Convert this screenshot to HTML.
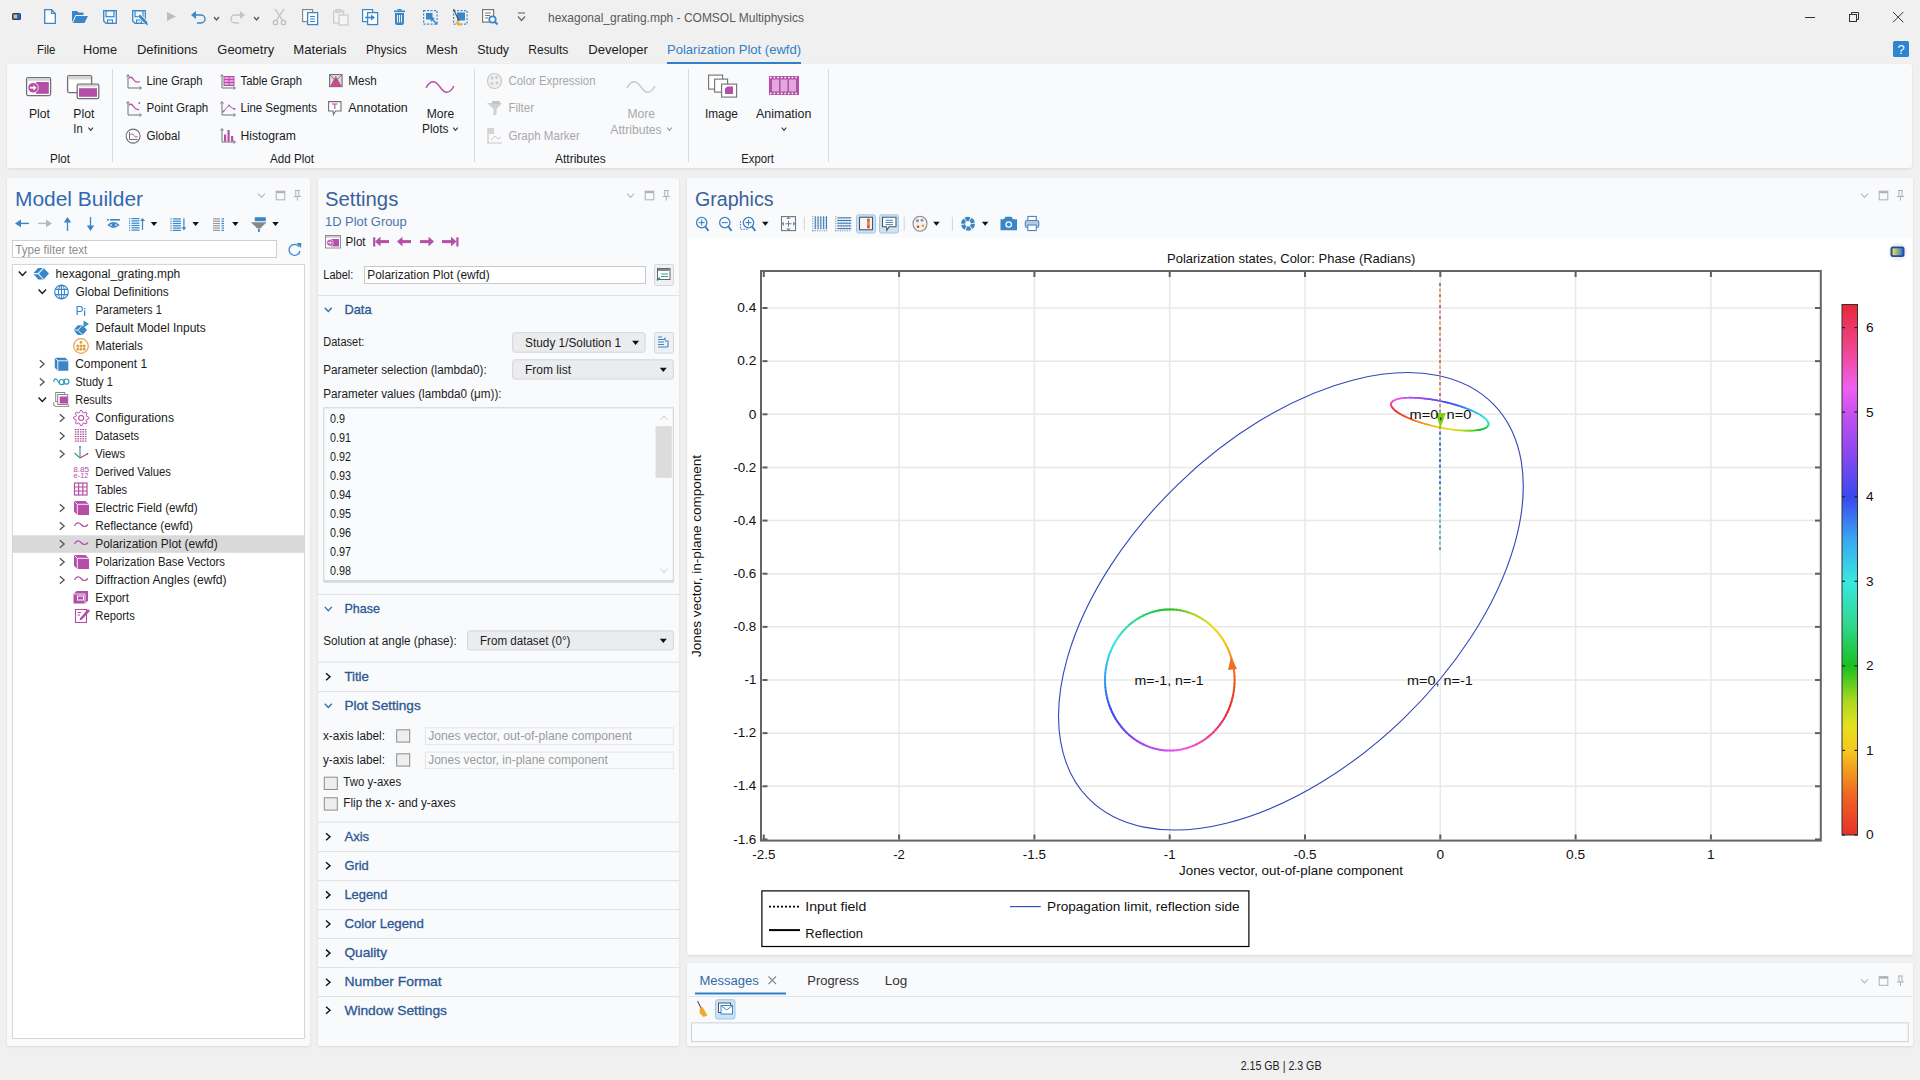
<!DOCTYPE html>
<html><head><meta charset="utf-8"><title>COMSOL</title>
<style>html,body{margin:0;padding:0;background:#f0f0f0;width:1920px;height:1080px;overflow:hidden}
svg{position:absolute;left:0;top:0;font-family:"Liberation Sans",sans-serif}</style></head>
<body><svg width="1920" height="1080" viewBox="0 0 1920 1080">
<defs><filter id="sh" x="-5%" y="-5%" width="110%" height="110%"><feDropShadow dx="0" dy="1" stdDeviation="0.8" flood-color="#000" flood-opacity="0.10"/></filter></defs>
<rect x="7" y="64" width="1905" height="104" fill="#f9fafc" rx="3" filter="url(#sh)"/>
<rect x="7" y="178" width="303" height="868" fill="#f9fafc" rx="3" filter="url(#sh)"/>
<rect x="318" y="178" width="361" height="868" fill="#f9fafc" rx="3" filter="url(#sh)"/>
<rect x="687" y="178" width="1226" height="777" fill="#f9fafc" rx="3" filter="url(#sh)"/>
<rect x="687" y="963" width="1226" height="83" fill="#f9fafc" rx="3" filter="url(#sh)"/>
<rect x="688" y="238" width="1224" height="716" fill="#ffffff"/>
<rect x="12.5" y="264.5" width="292" height="774" fill="#ffffff" stroke="#d6d6d6" stroke-width="1"/>
<rect x="12.5" y="240.5" width="264" height="17" fill="#ffffff" stroke="#cfcfcf" stroke-width="1"/>
<rect x="13" y="535.3" width="291.5" height="17.5" fill="#d9d9d9"/>
<rect x="667" y="62" width="134" height="2" fill="#2f80c8"/>
<line x1="112.5" y1="69" x2="112.5" y2="162" stroke="#dadada" stroke-width="1" />
<line x1="474.5" y1="69" x2="474.5" y2="162" stroke="#dadada" stroke-width="1" />
<line x1="688.5" y1="69" x2="688.5" y2="162" stroke="#dadada" stroke-width="1" />
<line x1="828.5" y1="69" x2="828.5" y2="162" stroke="#dadada" stroke-width="1" />
<line x1="318" y1="295.6" x2="679" y2="295.6" stroke="#dedfe2" stroke-width="1" />
<line x1="318" y1="594.4" x2="679" y2="594.4" stroke="#dedfe2" stroke-width="1" />
<line x1="318" y1="662.2" x2="679" y2="662.2" stroke="#dedfe2" stroke-width="1" />
<line x1="318" y1="691.6" x2="679" y2="691.6" stroke="#dedfe2" stroke-width="1" />
<line x1="318" y1="822.2" x2="679" y2="822.2" stroke="#dedfe2" stroke-width="1" />
<line x1="318" y1="851.6" x2="679" y2="851.6" stroke="#dedfe2" stroke-width="1" />
<line x1="318" y1="880.7" x2="679" y2="880.7" stroke="#dedfe2" stroke-width="1" />
<line x1="318" y1="909.6" x2="679" y2="909.6" stroke="#dedfe2" stroke-width="1" />
<line x1="318" y1="938.5" x2="679" y2="938.5" stroke="#dedfe2" stroke-width="1" />
<line x1="318" y1="967.6" x2="679" y2="967.6" stroke="#dedfe2" stroke-width="1" />
<line x1="318" y1="996.6" x2="679" y2="996.6" stroke="#dedfe2" stroke-width="1" />
<rect x="364.5" y="266.5" width="281" height="17" fill="#fff" stroke="#c9c9c9" stroke-width="1"/>
<rect x="654.5" y="264.5" width="19" height="21" fill="#eef0f3" stroke="#d4d6da" stroke-width="1" rx="2"/>
<g transform="translate(657,268)"><rect x="0.5" y="0.5" width="12.5" height="11" fill="#fff" stroke="#666" stroke-width="1"/><rect x="1" y="1" width="11.5" height="2" fill="#888"/><path d="M4,6 H11 M4,8.5 H11" stroke="#2aa0a0" stroke-width="1"/><path d="M0,12.5 L3,9.5" stroke="#2a9050" stroke-width="1.3"/></g>
<rect x="512.7" y="332.7" width="132.39999999999998" height="19.5" fill="#ebecee" stroke="#d3d5d8" stroke-width="1" rx="2"/>
<path d="M632.1,340.84999999999997 L639.1,340.84999999999997 L635.6,345.05 Z" fill="#111"/>
<rect x="512.7" y="359.8" width="160.5999999999999" height="19.30000000000001" fill="#ebecee" stroke="#d3d5d8" stroke-width="1" rx="2"/>
<path d="M659.8,367.85 L666.8,367.85 L663.3,372.05000000000007 Z" fill="#111"/>
<rect x="467.6" y="630.9" width="205.69999999999993" height="19.0" fill="#ebecee" stroke="#d3d5d8" stroke-width="1" rx="2"/>
<path d="M659.8,638.8 L666.8,638.8 L663.3,643.0 Z" fill="#111"/>
<rect x="654.5" y="332.5" width="19" height="20.5" fill="#eef0f3" stroke="#d4d6da" stroke-width="1" rx="2"/>
<g transform="translate(658,336)"><path d="M0,1 H4 M0,3.5 H6 M0,6 H6 M0,8.5 H6 M0,11 H10" stroke="#3a86c8" stroke-width="1"/><path d="M7,5 H10 V11" stroke="#3a86c8" stroke-width="1.1" fill="none"/><path d="M5.5,3 L7.5,1 L7.5,5 Z" fill="#3a86c8"/></g>
<rect x="323.8" y="407.8" width="349.5" height="174" fill="#fafbfd" stroke="#cfd1d4" stroke-width="1"/>
<rect x="324" y="580" width="349.5" height="2.6" fill="#d8d8d8"/>
<rect x="655.6" y="426.2" width="16.2" height="51.6" fill="#dcdcdc"/>
<path d="M660.5,568.75 L664,572.25 L667.5,568.75" fill="none" stroke="#c8c8c8" stroke-width="1"/>
<path d="M660.5,419.5 L664,416 L667.5,419.5" fill="none" stroke="#c8c8c8" stroke-width="1"/>
<rect x="396.7" y="729.8" width="13" height="12.3" fill="#eeeeee" stroke="#8c8c8c" stroke-width="1"/>
<rect x="396.7" y="753.8" width="13" height="12.3" fill="#eeeeee" stroke="#8c8c8c" stroke-width="1"/>
<rect x="324.3" y="777.2" width="13" height="12.3" fill="#eeeeee" stroke="#8c8c8c" stroke-width="1"/>
<rect x="324.3" y="797.8" width="13" height="12.3" fill="#eeeeee" stroke="#8c8c8c" stroke-width="1"/>
<rect x="425.4" y="727.8" width="248" height="16.6" fill="#f9fafc" stroke="#e3e4e7" stroke-width="1"/>
<rect x="425.4" y="752.1" width="248" height="16.3" fill="#f9fafc" stroke="#e3e4e7" stroke-width="1"/>
<path d="M324.8,307.70000000000005 L328.3,311.5 L331.8,307.70000000000005" fill="none" stroke="#3a6aa8" stroke-width="1.3"/>
<path d="M324.8,606.9 L328.3,610.6999999999999 L331.8,606.9" fill="none" stroke="#3a6aa8" stroke-width="1.3"/>
<path d="M324.8,703.7 L328.3,707.5 L331.8,703.7" fill="none" stroke="#3a6aa8" stroke-width="1.3"/>
<path d="M326.0,673.2 L330.0,676.7 L326.0,680.2" fill="none" stroke="#111" stroke-width="1.4"/>
<path d="M326.0,833.2 L330.0,836.7 L326.0,840.2" fill="none" stroke="#111" stroke-width="1.4"/>
<path d="M326.0,862.3 L330.0,865.8 L326.0,869.3" fill="none" stroke="#111" stroke-width="1.4"/>
<path d="M326.0,891.4 L330.0,894.9 L326.0,898.4" fill="none" stroke="#111" stroke-width="1.4"/>
<path d="M326.0,920.5 L330.0,924 L326.0,927.5" fill="none" stroke="#111" stroke-width="1.4"/>
<path d="M326.0,949.6 L330.0,953.1 L326.0,956.6" fill="none" stroke="#111" stroke-width="1.4"/>
<path d="M326.0,978.7 L330.0,982.2 L326.0,985.7" fill="none" stroke="#111" stroke-width="1.4"/>
<path d="M326.0,1006.8 L330.0,1010.3 L326.0,1013.8" fill="none" stroke="#111" stroke-width="1.4"/>
<rect x="695" y="992.5" width="91" height="2" fill="#2f80c8"/>
<line x1="688" y1="996.5" x2="1912" y2="996.5" stroke="#e3e4e7" stroke-width="1" />
<path d="M768.5,976.5 L776,984 M776,976.5 L768.5,984" fill="none" stroke="#8a8a8a" stroke-width="1.1"/>
<rect x="715.5" y="999.7" width="19.5" height="19.3" fill="#cce2f5" stroke="#9ec8ec" stroke-width="1" rx="2"/>
<rect x="718.5" y="1003" width="12" height="9.5" fill="#fff" stroke="#555"/><rect x="721" y="1005.5" width="11.5" height="8.5" fill="#fff" stroke="#3a86c8"/><path d="M721,1005.5 L726.7,1010 L732.5,1005.5" fill="none" stroke="#3a86c8"/>
<path d="M697.5,1001 L701.5,1009" stroke="#555" stroke-width="1.1"/><path d="M700,1008 L702.5,1007 L707.5,1015.5 L703.5,1017 L699.5,1013 Z" fill="#f0a830"/>
<rect x="691.5" y="1022.9" width="1216.7" height="18.8" fill="#fafbfd" stroke="#cfd1d4" stroke-width="1"/>
<rect x="856.5" y="214.8" width="19" height="18.2" fill="#cce2f5" stroke="#9ec8ec" stroke-width="1" rx="2"/>
<rect x="879.5" y="214.8" width="19" height="18.2" fill="#cce2f5" stroke="#9ec8ec" stroke-width="1" rx="2"/>
<circle cx="701.7" cy="222.6" r="5.2" fill="none" stroke="#3f82c0" stroke-width="1.3"/><path d="M705.3000000000001,226.5 L708.5,230.9" stroke="#3f82c0" stroke-width="2"/><path d="M698.7,222.6 H704.7" stroke="#3f82c0" stroke-width="1.1"/><path d="M701.7,219.6 V225.6" stroke="#3f82c0" stroke-width="1.1"/>
<circle cx="724.8" cy="222.6" r="5.2" fill="none" stroke="#3f82c0" stroke-width="1.3"/><path d="M728.4,226.5 L731.5999999999999,230.9" stroke="#3f82c0" stroke-width="2"/><path d="M721.8,222.6 H727.8" stroke="#3f82c0" stroke-width="1.1"/>
<path d="M740.5,221.25 V229.25 H748" fill="none" stroke="#3f82c0" stroke-width="1" stroke-dasharray="1.6,1.1"/>
<circle cx="748.5" cy="222.6" r="5.2" fill="none" stroke="#3f82c0" stroke-width="1.3"/><path d="M752.1,226.5 L755.3,230.9" stroke="#3f82c0" stroke-width="2"/><path d="M745.5,222.6 H751.5" stroke="#3f82c0" stroke-width="1.1"/><path d="M748.5,219.6 V225.6" stroke="#3f82c0" stroke-width="1.1"/>
<path d="M762.05,221.75 L768.55,221.75 L765.3,225.75 Z" fill="#111"/>
<rect x="781.5" y="216.6" width="14" height="14" fill="none" stroke="#777" stroke-width="1.1"/><path d="M788.5,220.75 V226.75 M785.5,223.75 H791.5" stroke="#777" stroke-width="1"/><path d="M786.2,218.8 L788.5,216.8 L790.8,218.8 Z M786.2,228.5 L788.5,230.5 L790.8,228.5 Z M783.8,221.45 L781.8,223.75 L783.8,226.05 Z M793.2,221.45 L795.2,223.75 L793.2,226.05 Z" fill="#3f82c0"/>
<line x1="804.3" y1="216.75" x2="804.3" y2="230.75" stroke="#d4d4d4" stroke-width="1" />
<line x1="904.2" y1="216.75" x2="904.2" y2="230.75" stroke="#d4d4d4" stroke-width="1" />
<line x1="952.4" y1="216.75" x2="952.4" y2="230.75" stroke="#d4d4d4" stroke-width="1" />
<g transform="translate(812.4,216.25)"><path d="M3,1.5 H15" stroke="#b8d4ec" stroke-width="0.8"/><path d="M3,4.1 H15" stroke="#b8d4ec" stroke-width="0.8"/><path d="M3,6.7 H15" stroke="#b8d4ec" stroke-width="0.8"/><path d="M3,9.3 H15" stroke="#b8d4ec" stroke-width="0.8"/><path d="M3,11.9 H15" stroke="#b8d4ec" stroke-width="0.8"/><rect x="2.3" y="0" width="1.1" height="13" fill="#3f78b0"/><rect x="5.1" y="0" width="1.1" height="13" fill="#3f78b0"/><rect x="7.9" y="0" width="1.1" height="13" fill="#3f78b0"/><rect x="10.7" y="0" width="1.1" height="13" fill="#3f78b0"/><rect x="13.5" y="0" width="1.1" height="13" fill="#3f78b0"/><path d="M0,14.5 H15" stroke="#777" stroke-dasharray="1,1.3"/><path d="M0.5,0 V15" stroke="#777" stroke-dasharray="1,1.3"/></g>
<g transform="translate(835.3,216.25)"><path d="M3.0,1 V13" stroke="#b8d4ec" stroke-width="0.8"/><path d="M5.8,1 V13" stroke="#b8d4ec" stroke-width="0.8"/><path d="M8.6,1 V13" stroke="#b8d4ec" stroke-width="0.8"/><path d="M11.4,1 V13" stroke="#b8d4ec" stroke-width="0.8"/><path d="M14.2,1 V13" stroke="#b8d4ec" stroke-width="0.8"/><rect x="2" y="1.0" width="14" height="1.1" fill="#3f78b0"/><rect x="2" y="3.7" width="14" height="1.1" fill="#3f78b0"/><rect x="2" y="6.4" width="14" height="1.1" fill="#3f78b0"/><rect x="2" y="9.1" width="14" height="1.1" fill="#3f78b0"/><rect x="2" y="11.8" width="14" height="1.1" fill="#3f78b0"/><path d="M0,14.5 H16" stroke="#777" stroke-dasharray="1,1.3"/><path d="M0.5,0 V15" stroke="#777" stroke-dasharray="1,1.3"/></g>
<defs><linearGradient id="cbi" x1="0" y1="0" x2="0" y2="1"><stop offset="0" stop-color="#b06050"/><stop offset="0.5" stop-color="#f09040"/><stop offset="1" stop-color="#e03a30"/></linearGradient></defs><rect x="859.5" y="217.25" width="13" height="12.5" fill="#f4f8fc" stroke="#555" stroke-width="1.1"/><rect x="867" y="218.75" width="2.8" height="9.5" fill="url(#cbi)"/>
<path d="M882.5,217.25 H896 V226.75 H889 L887,230.25 L886.5,226.75 H882.5 Z" fill="#fff" stroke="#555" stroke-width="1.1"/><path d="M885.5,220.25 H893 M885.5,222.45 H893 M885.5,224.65 H893" stroke="#3f82c0" stroke-width="1"/>
<ellipse cx="920" cy="223.75" rx="7" ry="7.5" fill="#f4f0ec" stroke="#888" stroke-width="1.1"/><circle cx="917.5" cy="220.75" r="1.4" fill="#888"/><circle cx="922" cy="220.25" r="1.3" fill="#5a90d0"/><circle cx="918" cy="226.75" r="1.3" fill="#d04040"/><circle cx="923" cy="225.75" r="1.3" fill="#e0a030"/>
<path d="M933.15,221.75 L939.65,221.75 L936.4,225.75 Z" fill="#111"/>
<path d="M968,223.75 L975.00,223.75 A7,7 0 0 1 972.50,229.11 Z" fill="#3a86c8"/><path d="M968,223.75 L971.50,229.81 A7,7 0 0 1 965.61,230.33 Z" fill="#3a86c8"/><path d="M968,223.75 L964.50,229.81 A7,7 0 0 1 961.11,224.97 Z" fill="#3a86c8"/><path d="M968,223.75 L961.00,223.75 A7,7 0 0 1 963.50,218.39 Z" fill="#3a86c8"/><path d="M968,223.75 L964.50,217.69 A7,7 0 0 1 970.39,217.17 Z" fill="#3a86c8"/><path d="M968,223.75 L971.50,217.69 A7,7 0 0 1 974.89,222.53 Z" fill="#3a86c8"/><circle cx="968" cy="223.75" r="2.8" fill="#fff"/>
<path d="M981.95,221.75 L988.45,221.75 L985.2,225.75 Z" fill="#111"/>
<path d="M1000.5,219.25 H1004 L1005.5,216.75 H1011.5 L1013,219.25 H1017 V230.25 H1000.5 Z" fill="#3a86c8"/><circle cx="1008.7" cy="224.55" r="3.3" fill="#fff"/><circle cx="1008.7" cy="224.55" r="2" fill="#3a86c8"/>
<rect x="1027.8" y="216.45" width="8.5" height="4.3" fill="#fff" stroke="#4a88c4" stroke-width="1.1"/><rect x="1025.3" y="220.45" width="13.5" height="7" rx="1.8" fill="#b8c8dc" stroke="#4a88c4" stroke-width="1.1"/><rect x="1027.8" y="225.05" width="8.5" height="5.5" fill="#fff" stroke="#4a88c4" stroke-width="1.1"/>
<defs><linearGradient id="ci" x1="0" y1="0" x2="1" y2="0"><stop offset="0" stop-color="#f0e050"/><stop offset="1" stop-color="#3a7ad0"/></linearGradient></defs><circle cx="1898" cy="251.8" r="9" fill="#eef1f6"/><rect x="1890.5" y="246.5" width="14" height="10.5" rx="2.5" fill="#1f4e9a"/><rect x="1892.5" y="248.3" width="10" height="7" rx="1" fill="url(#ci)"/>
<text x="548" y="21.8" font-size="12" fill="#5a5a5a" textLength="256" lengthAdjust="spacingAndGlyphs">hexagonal_grating.mph - COMSOL Multiphysics</text>
<text x="37" y="53.8" font-size="13" fill="#1b1b1b" textLength="18.4" lengthAdjust="spacingAndGlyphs">File</text>
<text x="83" y="53.8" font-size="13" fill="#1b1b1b" textLength="34" lengthAdjust="spacingAndGlyphs">Home</text>
<text x="137" y="53.8" font-size="13" fill="#1b1b1b" textLength="60.6" lengthAdjust="spacingAndGlyphs">Definitions</text>
<text x="217.3" y="53.8" font-size="13" fill="#1b1b1b" textLength="56.9" lengthAdjust="spacingAndGlyphs">Geometry</text>
<text x="293.3" y="53.8" font-size="13" fill="#1b1b1b" textLength="53.4" lengthAdjust="spacingAndGlyphs">Materials</text>
<text x="366" y="53.8" font-size="13" fill="#1b1b1b" textLength="40.7" lengthAdjust="spacingAndGlyphs">Physics</text>
<text x="426" y="53.8" font-size="13" fill="#1b1b1b" textLength="31.7" lengthAdjust="spacingAndGlyphs">Mesh</text>
<text x="477.3" y="53.8" font-size="13" fill="#1b1b1b" textLength="31.7" lengthAdjust="spacingAndGlyphs">Study</text>
<text x="528.3" y="53.8" font-size="13" fill="#1b1b1b" textLength="40" lengthAdjust="spacingAndGlyphs">Results</text>
<text x="588.3" y="53.8" font-size="13" fill="#1b1b1b" textLength="59.6" lengthAdjust="spacingAndGlyphs">Developer</text>
<text x="667" y="53.8" font-size="13" fill="#2f80c8" textLength="134" lengthAdjust="spacingAndGlyphs">Polarization Plot (ewfd)</text>
<text x="29" y="118" font-size="12" fill="#1b1b1b" textLength="21" lengthAdjust="spacingAndGlyphs">Plot</text>
<text x="73.3" y="118" font-size="12" fill="#1b1b1b" textLength="21" lengthAdjust="spacingAndGlyphs">Plot</text>
<text x="73.3" y="133" font-size="12" fill="#1b1b1b" textLength="9.4" lengthAdjust="spacingAndGlyphs">In</text>
<text x="146.5" y="85" font-size="12" fill="#1b1b1b" textLength="56" lengthAdjust="spacingAndGlyphs">Line Graph</text>
<text x="146.5" y="111.6" font-size="12" fill="#1b1b1b" textLength="61.8" lengthAdjust="spacingAndGlyphs">Point Graph</text>
<text x="146.5" y="139.5" font-size="12" fill="#1b1b1b" textLength="33.5" lengthAdjust="spacingAndGlyphs">Global</text>
<text x="240.5" y="85" font-size="12" fill="#1b1b1b" textLength="61.5" lengthAdjust="spacingAndGlyphs">Table Graph</text>
<text x="240.5" y="111.6" font-size="12" fill="#1b1b1b" textLength="76.5" lengthAdjust="spacingAndGlyphs">Line Segments</text>
<text x="240.5" y="139.5" font-size="12" fill="#1b1b1b" textLength="55.5" lengthAdjust="spacingAndGlyphs">Histogram</text>
<text x="348.3" y="85" font-size="12" fill="#1b1b1b" textLength="28.5" lengthAdjust="spacingAndGlyphs">Mesh</text>
<text x="348.3" y="111.6" font-size="12" fill="#1b1b1b" textLength="59.5" lengthAdjust="spacingAndGlyphs">Annotation</text>
<text x="426.7" y="118" font-size="12" fill="#1b1b1b" textLength="27.5" lengthAdjust="spacingAndGlyphs">More</text>
<text x="422" y="133" font-size="12" fill="#1b1b1b" textLength="26.5" lengthAdjust="spacingAndGlyphs">Plots</text>
<text x="50" y="163" font-size="12" fill="#1b1b1b" textLength="20" lengthAdjust="spacingAndGlyphs">Plot</text>
<text x="270" y="163" font-size="12" fill="#1b1b1b" textLength="44" lengthAdjust="spacingAndGlyphs">Add Plot</text>
<text x="555" y="163" font-size="12" fill="#1b1b1b" textLength="50.7" lengthAdjust="spacingAndGlyphs">Attributes</text>
<text x="741.3" y="163" font-size="12" fill="#1b1b1b" textLength="32.6" lengthAdjust="spacingAndGlyphs">Export</text>
<text x="508.5" y="85" font-size="12" fill="#a8a8a8" textLength="87" lengthAdjust="spacingAndGlyphs">Color Expression</text>
<text x="508.5" y="111.6" font-size="12" fill="#a8a8a8" textLength="25.5" lengthAdjust="spacingAndGlyphs">Filter</text>
<text x="508.5" y="139.5" font-size="12" fill="#a8a8a8" textLength="71.3" lengthAdjust="spacingAndGlyphs">Graph Marker</text>
<text x="627.6" y="118" font-size="12" fill="#a8a8a8" textLength="27.4" lengthAdjust="spacingAndGlyphs">More</text>
<text x="610.3" y="133.5" font-size="12" fill="#a8a8a8" textLength="51.4" lengthAdjust="spacingAndGlyphs">Attributes</text>
<text x="705" y="118" font-size="12" fill="#1b1b1b" textLength="32.8" lengthAdjust="spacingAndGlyphs">Image</text>
<text x="756" y="118" font-size="12" fill="#1b1b1b" textLength="55.4" lengthAdjust="spacingAndGlyphs">Animation</text>
<text x="15" y="206" font-size="21" fill="#3069b0" textLength="128" lengthAdjust="spacingAndGlyphs">Model Builder</text>
<text x="325" y="205.6" font-size="20" fill="#3a6299" textLength="73.3" lengthAdjust="spacingAndGlyphs">Settings</text>
<text x="325" y="225.6" font-size="13" fill="#4a74ad" textLength="81.7" lengthAdjust="spacingAndGlyphs">1D Plot Group</text>
<text x="694.9" y="205.8" font-size="20" fill="#3a6299" textLength="78.7" lengthAdjust="spacingAndGlyphs">Graphics</text>
<text x="15.3" y="253.5" font-size="12" fill="#8e8e8e" textLength="72" lengthAdjust="spacingAndGlyphs">Type filter text</text>
<text x="55.4" y="277.5" font-size="12" fill="#1b1b1b" textLength="124.8" lengthAdjust="spacingAndGlyphs">hexagonal_grating.mph</text>
<text x="75.6" y="295.5" font-size="12" fill="#1b1b1b" textLength="93.2" lengthAdjust="spacingAndGlyphs">Global Definitions</text>
<text x="95.5" y="313.5" font-size="12" fill="#1b1b1b" textLength="66.3" lengthAdjust="spacingAndGlyphs">Parameters 1</text>
<text x="95.5" y="331.5" font-size="12" fill="#1b1b1b" textLength="110.2" lengthAdjust="spacingAndGlyphs">Default Model Inputs</text>
<text x="95.5" y="349.5" font-size="12" fill="#1b1b1b" textLength="47.3" lengthAdjust="spacingAndGlyphs">Materials</text>
<text x="75.2" y="367.5" font-size="12" fill="#1b1b1b" textLength="71.9" lengthAdjust="spacingAndGlyphs">Component 1</text>
<text x="75.2" y="385.5" font-size="12" fill="#1b1b1b" textLength="37.8" lengthAdjust="spacingAndGlyphs">Study 1</text>
<text x="75.2" y="403.5" font-size="12" fill="#1b1b1b" textLength="36.7" lengthAdjust="spacingAndGlyphs">Results</text>
<text x="95.3" y="421.5" font-size="12" fill="#1b1b1b" textLength="78.7" lengthAdjust="spacingAndGlyphs">Configurations</text>
<text x="95.3" y="439.5" font-size="12" fill="#1b1b1b" textLength="43.7" lengthAdjust="spacingAndGlyphs">Datasets</text>
<text x="95.3" y="457.5" font-size="12" fill="#1b1b1b" textLength="29.7" lengthAdjust="spacingAndGlyphs">Views</text>
<text x="95.3" y="475.5" font-size="12" fill="#1b1b1b" textLength="75.7" lengthAdjust="spacingAndGlyphs">Derived Values</text>
<text x="95.3" y="493.5" font-size="12" fill="#1b1b1b" textLength="31.7" lengthAdjust="spacingAndGlyphs">Tables</text>
<text x="95.3" y="511.5" font-size="12" fill="#1b1b1b" textLength="102.3" lengthAdjust="spacingAndGlyphs">Electric Field (ewfd)</text>
<text x="95.3" y="529.5" font-size="12" fill="#1b1b1b" textLength="97.5" lengthAdjust="spacingAndGlyphs">Reflectance (ewfd)</text>
<text x="95.3" y="547.5" font-size="12" fill="#1b1b1b" textLength="122.4" lengthAdjust="spacingAndGlyphs">Polarization Plot (ewfd)</text>
<text x="95.3" y="565.5" font-size="12" fill="#1b1b1b" textLength="129.7" lengthAdjust="spacingAndGlyphs">Polarization Base Vectors</text>
<text x="95.3" y="583.5" font-size="12" fill="#1b1b1b" textLength="131.3" lengthAdjust="spacingAndGlyphs">Diffraction Angles (ewfd)</text>
<text x="95.3" y="601.5" font-size="12" fill="#1b1b1b" textLength="33.7" lengthAdjust="spacingAndGlyphs">Export</text>
<text x="95.3" y="619.5" font-size="12" fill="#1b1b1b" textLength="39.5" lengthAdjust="spacingAndGlyphs">Reports</text>
<text x="345.6" y="246.2" font-size="12" fill="#1b1b1b" textLength="20" lengthAdjust="spacingAndGlyphs">Plot</text>
<text x="323.3" y="278.9" font-size="12" fill="#1b1b1b" textLength="30" lengthAdjust="spacingAndGlyphs">Label:</text>
<text x="367.3" y="278.9" font-size="12" fill="#1b1b1b" textLength="122.3" lengthAdjust="spacingAndGlyphs">Polarization Plot (ewfd)</text>
<text x="323.3" y="346.3" font-size="12" fill="#1b1b1b" textLength="41" lengthAdjust="spacingAndGlyphs">Dataset:</text>
<text x="525.1" y="347.2" font-size="12" fill="#1b1b1b" textLength="96" lengthAdjust="spacingAndGlyphs">Study 1/Solution 1</text>
<text x="323.3" y="374" font-size="12" fill="#1b1b1b" textLength="163.4" lengthAdjust="spacingAndGlyphs">Parameter selection (lambda0):</text>
<text x="525" y="374" font-size="12" fill="#1b1b1b" textLength="46" lengthAdjust="spacingAndGlyphs">From list</text>
<text x="323.3" y="397.8" font-size="12" fill="#1b1b1b" textLength="178.3" lengthAdjust="spacingAndGlyphs">Parameter values (lambda0 (μm)):</text>
<text x="330" y="423.1" font-size="12" fill="#1b1b1b" textLength="15" lengthAdjust="spacingAndGlyphs">0.9</text>
<text x="330" y="442.1" font-size="12" fill="#1b1b1b" textLength="21" lengthAdjust="spacingAndGlyphs">0.91</text>
<text x="330" y="461.1" font-size="12" fill="#1b1b1b" textLength="21" lengthAdjust="spacingAndGlyphs">0.92</text>
<text x="330" y="480.1" font-size="12" fill="#1b1b1b" textLength="21" lengthAdjust="spacingAndGlyphs">0.93</text>
<text x="330" y="499.1" font-size="12" fill="#1b1b1b" textLength="21" lengthAdjust="spacingAndGlyphs">0.94</text>
<text x="330" y="518.1" font-size="12" fill="#1b1b1b" textLength="21" lengthAdjust="spacingAndGlyphs">0.95</text>
<text x="330" y="537.1" font-size="12" fill="#1b1b1b" textLength="21" lengthAdjust="spacingAndGlyphs">0.96</text>
<text x="330" y="556.1" font-size="12" fill="#1b1b1b" textLength="21" lengthAdjust="spacingAndGlyphs">0.97</text>
<text x="330" y="575.1" font-size="12" fill="#1b1b1b" textLength="21" lengthAdjust="spacingAndGlyphs">0.98</text>
<text x="323.3" y="644.9" font-size="12" fill="#1b1b1b" textLength="133.4" lengthAdjust="spacingAndGlyphs">Solution at angle (phase):</text>
<text x="480" y="644.9" font-size="12" fill="#1b1b1b" textLength="90.4" lengthAdjust="spacingAndGlyphs">From dataset (0°)</text>
<text x="322.9" y="740" font-size="12" fill="#1b1b1b" textLength="62" lengthAdjust="spacingAndGlyphs">x-axis label:</text>
<text x="428.2" y="740" font-size="12" fill="#9a9a9a" textLength="203.6" lengthAdjust="spacingAndGlyphs">Jones vector, out-of-plane component</text>
<text x="322.9" y="764" font-size="12" fill="#1b1b1b" textLength="62" lengthAdjust="spacingAndGlyphs">y-axis label:</text>
<text x="428.2" y="764" font-size="12" fill="#9a9a9a" textLength="179.6" lengthAdjust="spacingAndGlyphs">Jones vector, in-plane component</text>
<text x="343.3" y="786.2" font-size="12" fill="#1b1b1b" textLength="57.8" lengthAdjust="spacingAndGlyphs">Two y-axes</text>
<text x="343.3" y="807.3" font-size="12" fill="#1b1b1b" textLength="112.3" lengthAdjust="spacingAndGlyphs">Flip the x- and y-axes</text>
<text x="344.4" y="314" font-size="13" fill="#2d5893" textLength="27.2" lengthAdjust="spacingAndGlyphs" stroke="#2d5893" stroke-width="0.3">Data</text>
<text x="344.4" y="612.9" font-size="13" fill="#2d5893" textLength="35.6" lengthAdjust="spacingAndGlyphs" stroke="#2d5893" stroke-width="0.3">Phase</text>
<text x="344.4" y="681.1" font-size="13" fill="#2d5893" textLength="24.5" lengthAdjust="spacingAndGlyphs" stroke="#2d5893" stroke-width="0.3">Title</text>
<text x="344.4" y="710" font-size="13" fill="#2d5893" textLength="76.3" lengthAdjust="spacingAndGlyphs" stroke="#2d5893" stroke-width="0.3">Plot Settings</text>
<text x="344.4" y="841.1" font-size="13" fill="#2d5893" textLength="24.8" lengthAdjust="spacingAndGlyphs" stroke="#2d5893" stroke-width="0.3">Axis</text>
<text x="344.4" y="870.0" font-size="13" fill="#2d5893" textLength="24.4" lengthAdjust="spacingAndGlyphs" stroke="#2d5893" stroke-width="0.3">Grid</text>
<text x="344.4" y="899.0" font-size="13" fill="#2d5893" textLength="43.1" lengthAdjust="spacingAndGlyphs" stroke="#2d5893" stroke-width="0.3">Legend</text>
<text x="344.4" y="927.9" font-size="13" fill="#2d5893" textLength="79.4" lengthAdjust="spacingAndGlyphs" stroke="#2d5893" stroke-width="0.3">Color Legend</text>
<text x="344.4" y="956.8" font-size="13" fill="#2d5893" textLength="42.6" lengthAdjust="spacingAndGlyphs" stroke="#2d5893" stroke-width="0.3">Quality</text>
<text x="344.4" y="985.8" font-size="13" fill="#2d5893" textLength="97.3" lengthAdjust="spacingAndGlyphs" stroke="#2d5893" stroke-width="0.3">Number Format</text>
<text x="344.4" y="1014.7" font-size="13" fill="#2d5893" textLength="102.6" lengthAdjust="spacingAndGlyphs" stroke="#2d5893" stroke-width="0.3">Window Settings</text>
<text x="1167" y="263.3" font-size="13" fill="#111" textLength="248.2" lengthAdjust="spacingAndGlyphs">Polarization states, Color: Phase (Radians)</text>
<text x="699.4" y="984.8" font-size="12" fill="#2f6aa8" textLength="59.4" lengthAdjust="spacingAndGlyphs">Messages</text>
<text x="807.3" y="984.8" font-size="12" fill="#333" textLength="51.7" lengthAdjust="spacingAndGlyphs">Progress</text>
<text x="884.8" y="984.8" font-size="12" fill="#333" textLength="22.6" lengthAdjust="spacingAndGlyphs">Log</text>
<text x="1240.7" y="1069.5" font-size="12" fill="#222" textLength="80.8" lengthAdjust="spacingAndGlyphs">2.15 GB | 2.3 GB</text>
<line x1="899.0999999999999" y1="272" x2="899.0999999999999" y2="839.5" stroke="#e8e8e8" stroke-width="1.5" />
<line x1="1034.3999999999999" y1="272" x2="1034.3999999999999" y2="839.5" stroke="#e8e8e8" stroke-width="1.5" />
<line x1="1169.6999999999998" y1="272" x2="1169.6999999999998" y2="839.5" stroke="#e8e8e8" stroke-width="1.5" />
<line x1="1305.0" y1="272" x2="1305.0" y2="839.5" stroke="#e8e8e8" stroke-width="1.5" />
<line x1="1440.3" y1="272" x2="1440.3" y2="839.5" stroke="#e8e8e8" stroke-width="1.5" />
<line x1="1575.6" y1="272" x2="1575.6" y2="839.5" stroke="#e8e8e8" stroke-width="1.5" />
<line x1="1710.9" y1="272" x2="1710.9" y2="839.5" stroke="#e8e8e8" stroke-width="1.5" />
<line x1="762.5" y1="308.02" x2="1820" y2="308.02" stroke="#e8e8e8" stroke-width="1.5" />
<line x1="762.5" y1="361.16" x2="1820" y2="361.16" stroke="#e8e8e8" stroke-width="1.5" />
<line x1="762.5" y1="414.3" x2="1820" y2="414.3" stroke="#e8e8e8" stroke-width="1.5" />
<line x1="762.5" y1="467.44" x2="1820" y2="467.44" stroke="#e8e8e8" stroke-width="1.5" />
<line x1="762.5" y1="520.58" x2="1820" y2="520.58" stroke="#e8e8e8" stroke-width="1.5" />
<line x1="762.5" y1="573.72" x2="1820" y2="573.72" stroke="#e8e8e8" stroke-width="1.5" />
<line x1="762.5" y1="626.86" x2="1820" y2="626.86" stroke="#e8e8e8" stroke-width="1.5" />
<line x1="762.5" y1="680.0" x2="1820" y2="680.0" stroke="#e8e8e8" stroke-width="1.5" />
<line x1="762.5" y1="733.14" x2="1820" y2="733.14" stroke="#e8e8e8" stroke-width="1.5" />
<line x1="762.5" y1="786.28" x2="1820" y2="786.28" stroke="#e8e8e8" stroke-width="1.5" />
<ellipse cx="1290.9" cy="601.3" rx="282.6" ry="162.6" transform="rotate(-44.1 1290.9 601.3)" fill="none" stroke="#3347b6" stroke-width="1.1"/>
<line x1="1234.60" y1="680.00" x2="1234.51" y2="676.31" stroke="#ef6121" stroke-width="2" stroke-linecap="round"/>
<line x1="1234.51" y1="676.31" x2="1234.25" y2="672.62" stroke="#f06820" stroke-width="2" stroke-linecap="round"/>
<line x1="1234.25" y1="672.62" x2="1233.80" y2="668.96" stroke="#f07020" stroke-width="2" stroke-linecap="round"/>
<line x1="1233.80" y1="668.96" x2="1233.18" y2="665.32" stroke="#f17a20" stroke-width="2" stroke-linecap="round"/>
<line x1="1233.18" y1="665.32" x2="1232.39" y2="661.73" stroke="#f1831f" stroke-width="2" stroke-linecap="round"/>
<line x1="1232.39" y1="661.73" x2="1231.43" y2="658.18" stroke="#f28d1f" stroke-width="2" stroke-linecap="round"/>
<line x1="1231.43" y1="658.18" x2="1230.30" y2="654.70" stroke="#f2971f" stroke-width="2" stroke-linecap="round"/>
<line x1="1230.30" y1="654.70" x2="1229.00" y2="651.28" stroke="#f3a11f" stroke-width="2" stroke-linecap="round"/>
<line x1="1229.00" y1="651.28" x2="1227.54" y2="647.95" stroke="#f3ab1f" stroke-width="2" stroke-linecap="round"/>
<line x1="1227.54" y1="647.95" x2="1225.92" y2="644.70" stroke="#f4b51e" stroke-width="2" stroke-linecap="round"/>
<line x1="1225.92" y1="644.70" x2="1224.15" y2="641.55" stroke="#f4bf1e" stroke-width="2" stroke-linecap="round"/>
<line x1="1224.15" y1="641.55" x2="1222.22" y2="638.50" stroke="#f5c81e" stroke-width="2" stroke-linecap="round"/>
<line x1="1222.22" y1="638.50" x2="1220.16" y2="635.57" stroke="#f2cc1e" stroke-width="2" stroke-linecap="round"/>
<line x1="1220.16" y1="635.57" x2="1217.96" y2="632.76" stroke="#efd11f" stroke-width="2" stroke-linecap="round"/>
<line x1="1217.96" y1="632.76" x2="1215.62" y2="630.08" stroke="#ecd51f" stroke-width="2" stroke-linecap="round"/>
<line x1="1215.62" y1="630.08" x2="1213.16" y2="627.53" stroke="#e9d91f" stroke-width="2" stroke-linecap="round"/>
<line x1="1213.16" y1="627.53" x2="1210.58" y2="625.13" stroke="#e6dd20" stroke-width="2" stroke-linecap="round"/>
<line x1="1210.58" y1="625.13" x2="1207.89" y2="622.88" stroke="#e1e020" stroke-width="2" stroke-linecap="round"/>
<line x1="1207.89" y1="622.88" x2="1205.09" y2="620.79" stroke="#d6de20" stroke-width="2" stroke-linecap="round"/>
<line x1="1205.09" y1="620.79" x2="1202.20" y2="618.86" stroke="#ccdd20" stroke-width="2" stroke-linecap="round"/>
<line x1="1202.20" y1="618.86" x2="1199.22" y2="617.09" stroke="#c1db20" stroke-width="2" stroke-linecap="round"/>
<line x1="1199.22" y1="617.09" x2="1196.16" y2="615.50" stroke="#b7da20" stroke-width="2" stroke-linecap="round"/>
<line x1="1196.16" y1="615.50" x2="1193.02" y2="614.09" stroke="#acd920" stroke-width="2" stroke-linecap="round"/>
<line x1="1193.02" y1="614.09" x2="1189.82" y2="612.86" stroke="#9dd620" stroke-width="2" stroke-linecap="round"/>
<line x1="1189.82" y1="612.86" x2="1186.57" y2="611.81" stroke="#8ad320" stroke-width="2" stroke-linecap="round"/>
<line x1="1186.57" y1="611.81" x2="1183.27" y2="610.94" stroke="#77d020" stroke-width="2" stroke-linecap="round"/>
<line x1="1183.27" y1="610.94" x2="1179.94" y2="610.27" stroke="#64cd20" stroke-width="2" stroke-linecap="round"/>
<line x1="1179.94" y1="610.27" x2="1176.57" y2="609.79" stroke="#52ca20" stroke-width="2" stroke-linecap="round"/>
<line x1="1176.57" y1="609.79" x2="1173.19" y2="609.50" stroke="#3fc620" stroke-width="2" stroke-linecap="round"/>
<line x1="1173.19" y1="609.50" x2="1169.80" y2="609.40" stroke="#2cc320" stroke-width="2" stroke-linecap="round"/>
<line x1="1169.80" y1="609.40" x2="1166.41" y2="609.50" stroke="#19c020" stroke-width="2" stroke-linecap="round"/>
<line x1="1166.41" y1="609.50" x2="1163.03" y2="609.79" stroke="#1ac22b" stroke-width="2" stroke-linecap="round"/>
<line x1="1163.03" y1="609.79" x2="1159.66" y2="610.27" stroke="#1dc537" stroke-width="2" stroke-linecap="round"/>
<line x1="1159.66" y1="610.27" x2="1156.33" y2="610.94" stroke="#1fc743" stroke-width="2" stroke-linecap="round"/>
<line x1="1156.33" y1="610.94" x2="1153.03" y2="611.81" stroke="#22ca4e" stroke-width="2" stroke-linecap="round"/>
<line x1="1153.03" y1="611.81" x2="1149.78" y2="612.86" stroke="#24cc5a" stroke-width="2" stroke-linecap="round"/>
<line x1="1149.78" y1="612.86" x2="1146.58" y2="614.09" stroke="#27cf66" stroke-width="2" stroke-linecap="round"/>
<line x1="1146.58" y1="614.09" x2="1143.44" y2="615.50" stroke="#29d171" stroke-width="2" stroke-linecap="round"/>
<line x1="1143.44" y1="615.50" x2="1140.38" y2="617.09" stroke="#2cd47d" stroke-width="2" stroke-linecap="round"/>
<line x1="1140.38" y1="617.09" x2="1137.40" y2="618.86" stroke="#2ed689" stroke-width="2" stroke-linecap="round"/>
<line x1="1137.40" y1="618.86" x2="1134.51" y2="620.79" stroke="#30d993" stroke-width="2" stroke-linecap="round"/>
<line x1="1134.51" y1="620.79" x2="1131.71" y2="622.88" stroke="#31da9c" stroke-width="2" stroke-linecap="round"/>
<line x1="1131.71" y1="622.88" x2="1129.02" y2="625.13" stroke="#32dca4" stroke-width="2" stroke-linecap="round"/>
<line x1="1129.02" y1="625.13" x2="1126.44" y2="627.53" stroke="#33deac" stroke-width="2" stroke-linecap="round"/>
<line x1="1126.44" y1="627.53" x2="1123.98" y2="630.08" stroke="#34dfb5" stroke-width="2" stroke-linecap="round"/>
<line x1="1123.98" y1="630.08" x2="1121.64" y2="632.76" stroke="#35e1bd" stroke-width="2" stroke-linecap="round"/>
<line x1="1121.64" y1="632.76" x2="1119.44" y2="635.57" stroke="#35e3c6" stroke-width="2" stroke-linecap="round"/>
<line x1="1119.44" y1="635.57" x2="1117.38" y2="638.50" stroke="#36e4ce" stroke-width="2" stroke-linecap="round"/>
<line x1="1117.38" y1="638.50" x2="1115.45" y2="641.55" stroke="#37e6d6" stroke-width="2" stroke-linecap="round"/>
<line x1="1115.45" y1="641.55" x2="1113.68" y2="644.70" stroke="#38e8df" stroke-width="2" stroke-linecap="round"/>
<line x1="1113.68" y1="644.70" x2="1112.06" y2="647.95" stroke="#38e2e1" stroke-width="2" stroke-linecap="round"/>
<line x1="1112.06" y1="647.95" x2="1110.60" y2="651.28" stroke="#38dce3" stroke-width="2" stroke-linecap="round"/>
<line x1="1110.60" y1="651.28" x2="1109.30" y2="654.70" stroke="#38d5e5" stroke-width="2" stroke-linecap="round"/>
<line x1="1109.30" y1="654.70" x2="1108.17" y2="658.18" stroke="#38cee6" stroke-width="2" stroke-linecap="round"/>
<line x1="1108.17" y1="658.18" x2="1107.21" y2="661.73" stroke="#38c8e8" stroke-width="2" stroke-linecap="round"/>
<line x1="1107.21" y1="661.73" x2="1106.42" y2="665.32" stroke="#38c1ea" stroke-width="2" stroke-linecap="round"/>
<line x1="1106.42" y1="665.32" x2="1105.80" y2="668.96" stroke="#38baeb" stroke-width="2" stroke-linecap="round"/>
<line x1="1105.80" y1="668.96" x2="1105.35" y2="672.62" stroke="#38b3ed" stroke-width="2" stroke-linecap="round"/>
<line x1="1105.35" y1="672.62" x2="1105.09" y2="676.31" stroke="#38adef" stroke-width="2" stroke-linecap="round"/>
<line x1="1105.09" y1="676.31" x2="1105.00" y2="680.00" stroke="#38a5f0" stroke-width="2" stroke-linecap="round"/>
<line x1="1105.00" y1="680.00" x2="1105.09" y2="683.69" stroke="#389bf0" stroke-width="2" stroke-linecap="round"/>
<line x1="1105.09" y1="683.69" x2="1105.35" y2="687.38" stroke="#3891f0" stroke-width="2" stroke-linecap="round"/>
<line x1="1105.35" y1="687.38" x2="1105.80" y2="691.04" stroke="#3887f0" stroke-width="2" stroke-linecap="round"/>
<line x1="1105.80" y1="691.04" x2="1106.42" y2="694.68" stroke="#387df0" stroke-width="2" stroke-linecap="round"/>
<line x1="1106.42" y1="694.68" x2="1107.21" y2="698.27" stroke="#3873f0" stroke-width="2" stroke-linecap="round"/>
<line x1="1107.21" y1="698.27" x2="1108.17" y2="701.82" stroke="#3869f0" stroke-width="2" stroke-linecap="round"/>
<line x1="1108.17" y1="701.82" x2="1109.30" y2="705.30" stroke="#385ff0" stroke-width="2" stroke-linecap="round"/>
<line x1="1109.30" y1="705.30" x2="1110.60" y2="708.72" stroke="#3855f0" stroke-width="2" stroke-linecap="round"/>
<line x1="1110.60" y1="708.72" x2="1112.06" y2="712.05" stroke="#384bf0" stroke-width="2" stroke-linecap="round"/>
<line x1="1112.06" y1="712.05" x2="1113.68" y2="715.30" stroke="#3e48f0" stroke-width="2" stroke-linecap="round"/>
<line x1="1113.68" y1="715.30" x2="1115.45" y2="718.45" stroke="#4748f0" stroke-width="2" stroke-linecap="round"/>
<line x1="1115.45" y1="718.45" x2="1117.38" y2="721.50" stroke="#4f48f0" stroke-width="2" stroke-linecap="round"/>
<line x1="1117.38" y1="721.50" x2="1119.44" y2="724.43" stroke="#5748f0" stroke-width="2" stroke-linecap="round"/>
<line x1="1119.44" y1="724.43" x2="1121.64" y2="727.24" stroke="#6048f0" stroke-width="2" stroke-linecap="round"/>
<line x1="1121.64" y1="727.24" x2="1123.98" y2="729.92" stroke="#6848f0" stroke-width="2" stroke-linecap="round"/>
<line x1="1123.98" y1="729.92" x2="1126.44" y2="732.47" stroke="#7148f0" stroke-width="2" stroke-linecap="round"/>
<line x1="1126.44" y1="732.47" x2="1129.02" y2="734.87" stroke="#7948f0" stroke-width="2" stroke-linecap="round"/>
<line x1="1129.02" y1="734.87" x2="1131.71" y2="737.12" stroke="#8148f0" stroke-width="2" stroke-linecap="round"/>
<line x1="1131.71" y1="737.12" x2="1134.51" y2="739.21" stroke="#8948f0" stroke-width="2" stroke-linecap="round"/>
<line x1="1134.51" y1="739.21" x2="1137.40" y2="741.14" stroke="#9049f0" stroke-width="2" stroke-linecap="round"/>
<line x1="1137.40" y1="741.14" x2="1140.38" y2="742.91" stroke="#974af0" stroke-width="2" stroke-linecap="round"/>
<line x1="1140.38" y1="742.91" x2="1143.44" y2="744.50" stroke="#9d4bf0" stroke-width="2" stroke-linecap="round"/>
<line x1="1143.44" y1="744.50" x2="1146.58" y2="745.91" stroke="#a44cf0" stroke-width="2" stroke-linecap="round"/>
<line x1="1146.58" y1="745.91" x2="1149.78" y2="747.14" stroke="#ab4cf0" stroke-width="2" stroke-linecap="round"/>
<line x1="1149.78" y1="747.14" x2="1153.03" y2="748.19" stroke="#b24df0" stroke-width="2" stroke-linecap="round"/>
<line x1="1153.03" y1="748.19" x2="1156.33" y2="749.06" stroke="#b84ef0" stroke-width="2" stroke-linecap="round"/>
<line x1="1156.33" y1="749.06" x2="1159.66" y2="749.73" stroke="#bf4ff0" stroke-width="2" stroke-linecap="round"/>
<line x1="1159.66" y1="749.73" x2="1163.03" y2="750.21" stroke="#c650f0" stroke-width="2" stroke-linecap="round"/>
<line x1="1163.03" y1="750.21" x2="1166.41" y2="750.50" stroke="#cd52f0" stroke-width="2" stroke-linecap="round"/>
<line x1="1166.41" y1="750.50" x2="1169.80" y2="750.60" stroke="#d355f0" stroke-width="2" stroke-linecap="round"/>
<line x1="1169.80" y1="750.60" x2="1173.19" y2="750.50" stroke="#da57f0" stroke-width="2" stroke-linecap="round"/>
<line x1="1173.19" y1="750.50" x2="1176.57" y2="750.21" stroke="#e15af0" stroke-width="2" stroke-linecap="round"/>
<line x1="1176.57" y1="750.21" x2="1179.94" y2="749.73" stroke="#e85df0" stroke-width="2" stroke-linecap="round"/>
<line x1="1179.94" y1="749.73" x2="1183.27" y2="749.06" stroke="#ef60f0" stroke-width="2" stroke-linecap="round"/>
<line x1="1183.27" y1="749.06" x2="1186.57" y2="748.19" stroke="#f05de5" stroke-width="2" stroke-linecap="round"/>
<line x1="1186.57" y1="748.19" x2="1189.82" y2="747.14" stroke="#f05ada" stroke-width="2" stroke-linecap="round"/>
<line x1="1189.82" y1="747.14" x2="1193.02" y2="745.91" stroke="#f057ce" stroke-width="2" stroke-linecap="round"/>
<line x1="1193.02" y1="745.91" x2="1196.16" y2="744.50" stroke="#f054c3" stroke-width="2" stroke-linecap="round"/>
<line x1="1196.16" y1="744.50" x2="1199.22" y2="742.91" stroke="#f051b7" stroke-width="2" stroke-linecap="round"/>
<line x1="1199.22" y1="742.91" x2="1202.20" y2="741.14" stroke="#f04dac" stroke-width="2" stroke-linecap="round"/>
<line x1="1202.20" y1="741.14" x2="1205.09" y2="739.21" stroke="#f04aa0" stroke-width="2" stroke-linecap="round"/>
<line x1="1205.09" y1="739.21" x2="1207.89" y2="737.12" stroke="#f04796" stroke-width="2" stroke-linecap="round"/>
<line x1="1207.89" y1="737.12" x2="1210.58" y2="734.87" stroke="#ef448d" stroke-width="2" stroke-linecap="round"/>
<line x1="1210.58" y1="734.87" x2="1213.16" y2="732.47" stroke="#ee4185" stroke-width="2" stroke-linecap="round"/>
<line x1="1213.16" y1="732.47" x2="1215.62" y2="729.92" stroke="#ee3f7c" stroke-width="2" stroke-linecap="round"/>
<line x1="1215.62" y1="729.92" x2="1217.96" y2="727.24" stroke="#ed3c74" stroke-width="2" stroke-linecap="round"/>
<line x1="1217.96" y1="727.24" x2="1220.16" y2="724.43" stroke="#ec396b" stroke-width="2" stroke-linecap="round"/>
<line x1="1220.16" y1="724.43" x2="1222.22" y2="721.50" stroke="#eb3663" stroke-width="2" stroke-linecap="round"/>
<line x1="1222.22" y1="721.50" x2="1224.15" y2="718.45" stroke="#eb335b" stroke-width="2" stroke-linecap="round"/>
<line x1="1224.15" y1="718.45" x2="1225.92" y2="715.30" stroke="#ea3052" stroke-width="2" stroke-linecap="round"/>
<line x1="1225.92" y1="715.30" x2="1227.54" y2="712.05" stroke="#e92d4a" stroke-width="2" stroke-linecap="round"/>
<line x1="1227.54" y1="712.05" x2="1229.00" y2="708.72" stroke="#e92a41" stroke-width="2" stroke-linecap="round"/>
<line x1="1229.00" y1="708.72" x2="1230.30" y2="705.30" stroke="#e8312a" stroke-width="2" stroke-linecap="round"/>
<line x1="1230.30" y1="705.30" x2="1231.43" y2="701.82" stroke="#e93729" stroke-width="2" stroke-linecap="round"/>
<line x1="1231.43" y1="701.82" x2="1232.39" y2="698.27" stroke="#ea3d28" stroke-width="2" stroke-linecap="round"/>
<line x1="1232.39" y1="698.27" x2="1233.18" y2="694.68" stroke="#eb4327" stroke-width="2" stroke-linecap="round"/>
<line x1="1233.18" y1="694.68" x2="1233.80" y2="691.04" stroke="#eb4926" stroke-width="2" stroke-linecap="round"/>
<line x1="1233.80" y1="691.04" x2="1234.25" y2="687.38" stroke="#ec4f25" stroke-width="2" stroke-linecap="round"/>
<line x1="1234.25" y1="687.38" x2="1234.51" y2="683.69" stroke="#ed5524" stroke-width="2" stroke-linecap="round"/>
<line x1="1234.51" y1="683.69" x2="1234.60" y2="680.00" stroke="#ee5b23" stroke-width="2" stroke-linecap="round"/>
<path d="M1231,656.5 L1228,670 L1237,669 Z" fill="#f07020"/>
<line x1="1488.48" y1="424.72" x2="1488.26" y2="425.37" stroke="#31da9c" stroke-width="1.7" stroke-linecap="round"/>
<line x1="1488.26" y1="425.37" x2="1487.92" y2="425.99" stroke="#30d993" stroke-width="1.7" stroke-linecap="round"/>
<line x1="1487.92" y1="425.99" x2="1487.45" y2="426.58" stroke="#2fd789" stroke-width="1.7" stroke-linecap="round"/>
<line x1="1487.45" y1="426.58" x2="1486.84" y2="427.14" stroke="#2cd47d" stroke-width="1.7" stroke-linecap="round"/>
<line x1="1486.84" y1="427.14" x2="1486.11" y2="427.65" stroke="#29d172" stroke-width="1.7" stroke-linecap="round"/>
<line x1="1486.11" y1="427.65" x2="1485.24" y2="428.14" stroke="#27cf66" stroke-width="1.7" stroke-linecap="round"/>
<line x1="1485.24" y1="428.14" x2="1484.26" y2="428.58" stroke="#24cc5a" stroke-width="1.7" stroke-linecap="round"/>
<line x1="1484.26" y1="428.58" x2="1483.15" y2="428.98" stroke="#22ca4e" stroke-width="1.7" stroke-linecap="round"/>
<line x1="1483.15" y1="428.98" x2="1481.92" y2="429.35" stroke="#1fc743" stroke-width="1.7" stroke-linecap="round"/>
<line x1="1481.92" y1="429.35" x2="1480.58" y2="429.67" stroke="#1dc537" stroke-width="1.7" stroke-linecap="round"/>
<line x1="1480.58" y1="429.67" x2="1479.13" y2="429.95" stroke="#1ac22b" stroke-width="1.7" stroke-linecap="round"/>
<line x1="1479.13" y1="429.95" x2="1477.56" y2="430.18" stroke="#19c020" stroke-width="1.7" stroke-linecap="round"/>
<line x1="1477.56" y1="430.18" x2="1475.90" y2="430.38" stroke="#2cc320" stroke-width="1.7" stroke-linecap="round"/>
<line x1="1475.90" y1="430.38" x2="1474.13" y2="430.52" stroke="#3ec620" stroke-width="1.7" stroke-linecap="round"/>
<line x1="1474.13" y1="430.52" x2="1472.28" y2="430.63" stroke="#51ca20" stroke-width="1.7" stroke-linecap="round"/>
<line x1="1472.28" y1="430.63" x2="1470.33" y2="430.68" stroke="#64cd20" stroke-width="1.7" stroke-linecap="round"/>
<line x1="1470.33" y1="430.68" x2="1468.30" y2="430.70" stroke="#77d020" stroke-width="1.7" stroke-linecap="round"/>
<line x1="1468.30" y1="430.70" x2="1466.19" y2="430.67" stroke="#8ad320" stroke-width="1.7" stroke-linecap="round"/>
<line x1="1466.19" y1="430.67" x2="1464.01" y2="430.59" stroke="#9dd620" stroke-width="1.7" stroke-linecap="round"/>
<line x1="1464.01" y1="430.59" x2="1461.76" y2="430.47" stroke="#acd920" stroke-width="1.7" stroke-linecap="round"/>
<line x1="1461.76" y1="430.47" x2="1459.45" y2="430.30" stroke="#b7da20" stroke-width="1.7" stroke-linecap="round"/>
<line x1="1459.45" y1="430.30" x2="1457.09" y2="430.09" stroke="#c1db20" stroke-width="1.7" stroke-linecap="round"/>
<line x1="1457.09" y1="430.09" x2="1454.68" y2="429.83" stroke="#ccdd20" stroke-width="1.7" stroke-linecap="round"/>
<line x1="1454.68" y1="429.83" x2="1452.23" y2="429.54" stroke="#d6de20" stroke-width="1.7" stroke-linecap="round"/>
<line x1="1452.23" y1="429.54" x2="1449.74" y2="429.20" stroke="#e1e020" stroke-width="1.7" stroke-linecap="round"/>
<line x1="1449.74" y1="429.20" x2="1447.23" y2="428.82" stroke="#e6dd20" stroke-width="1.7" stroke-linecap="round"/>
<line x1="1447.23" y1="428.82" x2="1444.70" y2="428.40" stroke="#e9d91f" stroke-width="1.7" stroke-linecap="round"/>
<line x1="1444.70" y1="428.40" x2="1442.16" y2="427.94" stroke="#ecd51f" stroke-width="1.7" stroke-linecap="round"/>
<line x1="1442.16" y1="427.94" x2="1439.60" y2="427.44" stroke="#efd11f" stroke-width="1.7" stroke-linecap="round"/>
<line x1="1439.60" y1="427.44" x2="1437.05" y2="426.91" stroke="#f2cc1e" stroke-width="1.7" stroke-linecap="round"/>
<line x1="1437.05" y1="426.91" x2="1434.51" y2="426.34" stroke="#f5c81e" stroke-width="1.7" stroke-linecap="round"/>
<line x1="1434.51" y1="426.34" x2="1431.98" y2="425.74" stroke="#f5bf1e" stroke-width="1.7" stroke-linecap="round"/>
<line x1="1431.98" y1="425.74" x2="1429.47" y2="425.10" stroke="#f4b51e" stroke-width="1.7" stroke-linecap="round"/>
<line x1="1429.47" y1="425.10" x2="1426.99" y2="424.44" stroke="#f3ab1f" stroke-width="1.7" stroke-linecap="round"/>
<line x1="1426.99" y1="424.44" x2="1424.55" y2="423.75" stroke="#f3a11f" stroke-width="1.7" stroke-linecap="round"/>
<line x1="1424.55" y1="423.75" x2="1422.15" y2="423.03" stroke="#f2971f" stroke-width="1.7" stroke-linecap="round"/>
<line x1="1422.15" y1="423.03" x2="1419.79" y2="422.29" stroke="#f28e1f" stroke-width="1.7" stroke-linecap="round"/>
<line x1="1419.79" y1="422.29" x2="1417.49" y2="421.53" stroke="#f1841f" stroke-width="1.7" stroke-linecap="round"/>
<line x1="1417.49" y1="421.53" x2="1415.25" y2="420.74" stroke="#f17a20" stroke-width="1.7" stroke-linecap="round"/>
<line x1="1415.25" y1="420.74" x2="1413.08" y2="419.94" stroke="#f07020" stroke-width="1.7" stroke-linecap="round"/>
<line x1="1413.08" y1="419.94" x2="1410.99" y2="419.12" stroke="#f06820" stroke-width="1.7" stroke-linecap="round"/>
<line x1="1410.99" y1="419.12" x2="1408.97" y2="418.29" stroke="#ef6221" stroke-width="1.7" stroke-linecap="round"/>
<line x1="1408.97" y1="418.29" x2="1407.03" y2="417.45" stroke="#ee5b23" stroke-width="1.7" stroke-linecap="round"/>
<line x1="1407.03" y1="417.45" x2="1405.19" y2="416.60" stroke="#ed5524" stroke-width="1.7" stroke-linecap="round"/>
<line x1="1405.19" y1="416.60" x2="1403.44" y2="415.74" stroke="#ec4f25" stroke-width="1.7" stroke-linecap="round"/>
<line x1="1403.44" y1="415.74" x2="1401.79" y2="414.88" stroke="#eb4926" stroke-width="1.7" stroke-linecap="round"/>
<line x1="1401.79" y1="414.88" x2="1400.24" y2="414.02" stroke="#eb4327" stroke-width="1.7" stroke-linecap="round"/>
<line x1="1400.24" y1="414.02" x2="1398.81" y2="413.15" stroke="#ea3d28" stroke-width="1.7" stroke-linecap="round"/>
<line x1="1398.81" y1="413.15" x2="1397.48" y2="412.29" stroke="#e93729" stroke-width="1.7" stroke-linecap="round"/>
<line x1="1397.48" y1="412.29" x2="1396.27" y2="411.44" stroke="#e8312a" stroke-width="1.7" stroke-linecap="round"/>
<line x1="1396.27" y1="411.44" x2="1395.18" y2="410.59" stroke="#e92a41" stroke-width="1.7" stroke-linecap="round"/>
<line x1="1395.18" y1="410.59" x2="1394.22" y2="409.75" stroke="#e92d4a" stroke-width="1.7" stroke-linecap="round"/>
<line x1="1394.22" y1="409.75" x2="1393.37" y2="408.93" stroke="#ea3052" stroke-width="1.7" stroke-linecap="round"/>
<line x1="1393.37" y1="408.93" x2="1392.66" y2="408.12" stroke="#eb335a" stroke-width="1.7" stroke-linecap="round"/>
<line x1="1392.66" y1="408.12" x2="1392.07" y2="407.32" stroke="#eb3663" stroke-width="1.7" stroke-linecap="round"/>
<line x1="1392.07" y1="407.32" x2="1391.62" y2="406.55" stroke="#ec396b" stroke-width="1.7" stroke-linecap="round"/>
<line x1="1391.62" y1="406.55" x2="1391.29" y2="405.79" stroke="#ed3c74" stroke-width="1.7" stroke-linecap="round"/>
<line x1="1391.29" y1="405.79" x2="1391.10" y2="405.06" stroke="#ee3f7c" stroke-width="1.7" stroke-linecap="round"/>
<line x1="1391.10" y1="405.06" x2="1391.05" y2="404.36" stroke="#ee4185" stroke-width="1.7" stroke-linecap="round"/>
<line x1="1391.05" y1="404.36" x2="1391.12" y2="403.68" stroke="#ef448d" stroke-width="1.7" stroke-linecap="round"/>
<line x1="1391.12" y1="403.68" x2="1391.34" y2="403.03" stroke="#f04796" stroke-width="1.7" stroke-linecap="round"/>
<line x1="1391.34" y1="403.03" x2="1391.68" y2="402.41" stroke="#f04aa0" stroke-width="1.7" stroke-linecap="round"/>
<line x1="1391.68" y1="402.41" x2="1392.15" y2="401.82" stroke="#f04dac" stroke-width="1.7" stroke-linecap="round"/>
<line x1="1392.15" y1="401.82" x2="1392.76" y2="401.26" stroke="#f051b7" stroke-width="1.7" stroke-linecap="round"/>
<line x1="1392.76" y1="401.26" x2="1393.49" y2="400.75" stroke="#f054c3" stroke-width="1.7" stroke-linecap="round"/>
<line x1="1393.49" y1="400.75" x2="1394.36" y2="400.26" stroke="#f057ce" stroke-width="1.7" stroke-linecap="round"/>
<line x1="1394.36" y1="400.26" x2="1395.34" y2="399.82" stroke="#f05ada" stroke-width="1.7" stroke-linecap="round"/>
<line x1="1395.34" y1="399.82" x2="1396.45" y2="399.42" stroke="#f05de5" stroke-width="1.7" stroke-linecap="round"/>
<line x1="1396.45" y1="399.42" x2="1397.68" y2="399.05" stroke="#f060f0" stroke-width="1.7" stroke-linecap="round"/>
<line x1="1397.68" y1="399.05" x2="1399.02" y2="398.73" stroke="#e95df0" stroke-width="1.7" stroke-linecap="round"/>
<line x1="1399.02" y1="398.73" x2="1400.47" y2="398.45" stroke="#e25af0" stroke-width="1.7" stroke-linecap="round"/>
<line x1="1400.47" y1="398.45" x2="1402.04" y2="398.22" stroke="#db57f0" stroke-width="1.7" stroke-linecap="round"/>
<line x1="1402.04" y1="398.22" x2="1403.70" y2="398.02" stroke="#d455f0" stroke-width="1.7" stroke-linecap="round"/>
<line x1="1403.70" y1="398.02" x2="1405.47" y2="397.88" stroke="#cd52f0" stroke-width="1.7" stroke-linecap="round"/>
<line x1="1405.47" y1="397.88" x2="1407.32" y2="397.77" stroke="#c650f0" stroke-width="1.7" stroke-linecap="round"/>
<line x1="1407.32" y1="397.77" x2="1409.27" y2="397.72" stroke="#bf4ff0" stroke-width="1.7" stroke-linecap="round"/>
<line x1="1409.27" y1="397.72" x2="1411.30" y2="397.70" stroke="#b84ef0" stroke-width="1.7" stroke-linecap="round"/>
<line x1="1411.30" y1="397.70" x2="1413.41" y2="397.73" stroke="#b24df0" stroke-width="1.7" stroke-linecap="round"/>
<line x1="1413.41" y1="397.73" x2="1415.59" y2="397.81" stroke="#ab4cf0" stroke-width="1.7" stroke-linecap="round"/>
<line x1="1415.59" y1="397.81" x2="1417.84" y2="397.93" stroke="#a44cf0" stroke-width="1.7" stroke-linecap="round"/>
<line x1="1417.84" y1="397.93" x2="1420.15" y2="398.10" stroke="#9e4bf0" stroke-width="1.7" stroke-linecap="round"/>
<line x1="1420.15" y1="398.10" x2="1422.51" y2="398.31" stroke="#974af0" stroke-width="1.7" stroke-linecap="round"/>
<line x1="1422.51" y1="398.31" x2="1424.92" y2="398.57" stroke="#9049f0" stroke-width="1.7" stroke-linecap="round"/>
<line x1="1424.92" y1="398.57" x2="1427.37" y2="398.86" stroke="#8948f0" stroke-width="1.7" stroke-linecap="round"/>
<line x1="1427.37" y1="398.86" x2="1429.86" y2="399.20" stroke="#8148f0" stroke-width="1.7" stroke-linecap="round"/>
<line x1="1429.86" y1="399.20" x2="1432.37" y2="399.58" stroke="#7948f0" stroke-width="1.7" stroke-linecap="round"/>
<line x1="1432.37" y1="399.58" x2="1434.90" y2="400.00" stroke="#7148f0" stroke-width="1.7" stroke-linecap="round"/>
<line x1="1434.90" y1="400.00" x2="1437.44" y2="400.46" stroke="#6848f0" stroke-width="1.7" stroke-linecap="round"/>
<line x1="1437.44" y1="400.46" x2="1440.00" y2="400.96" stroke="#6048f0" stroke-width="1.7" stroke-linecap="round"/>
<line x1="1440.00" y1="400.96" x2="1442.55" y2="401.49" stroke="#5848f0" stroke-width="1.7" stroke-linecap="round"/>
<line x1="1442.55" y1="401.49" x2="1445.09" y2="402.06" stroke="#4f48f0" stroke-width="1.7" stroke-linecap="round"/>
<line x1="1445.09" y1="402.06" x2="1447.62" y2="402.66" stroke="#4748f0" stroke-width="1.7" stroke-linecap="round"/>
<line x1="1447.62" y1="402.66" x2="1450.13" y2="403.30" stroke="#3e48f0" stroke-width="1.7" stroke-linecap="round"/>
<line x1="1450.13" y1="403.30" x2="1452.61" y2="403.96" stroke="#384af0" stroke-width="1.7" stroke-linecap="round"/>
<line x1="1452.61" y1="403.96" x2="1455.05" y2="404.65" stroke="#3854f0" stroke-width="1.7" stroke-linecap="round"/>
<line x1="1455.05" y1="404.65" x2="1457.45" y2="405.37" stroke="#385ef0" stroke-width="1.7" stroke-linecap="round"/>
<line x1="1457.45" y1="405.37" x2="1459.81" y2="406.11" stroke="#3869f0" stroke-width="1.7" stroke-linecap="round"/>
<line x1="1459.81" y1="406.11" x2="1462.11" y2="406.87" stroke="#3873f0" stroke-width="1.7" stroke-linecap="round"/>
<line x1="1462.11" y1="406.87" x2="1464.35" y2="407.66" stroke="#387df0" stroke-width="1.7" stroke-linecap="round"/>
<line x1="1464.35" y1="407.66" x2="1466.52" y2="408.46" stroke="#3887f0" stroke-width="1.7" stroke-linecap="round"/>
<line x1="1466.52" y1="408.46" x2="1468.61" y2="409.28" stroke="#3891f0" stroke-width="1.7" stroke-linecap="round"/>
<line x1="1468.61" y1="409.28" x2="1470.63" y2="410.11" stroke="#389bf0" stroke-width="1.7" stroke-linecap="round"/>
<line x1="1470.63" y1="410.11" x2="1472.57" y2="410.95" stroke="#38a5f0" stroke-width="1.7" stroke-linecap="round"/>
<line x1="1472.57" y1="410.95" x2="1474.41" y2="411.80" stroke="#38adef" stroke-width="1.7" stroke-linecap="round"/>
<line x1="1474.41" y1="411.80" x2="1476.16" y2="412.66" stroke="#38b3ed" stroke-width="1.7" stroke-linecap="round"/>
<line x1="1476.16" y1="412.66" x2="1477.81" y2="413.52" stroke="#38baeb" stroke-width="1.7" stroke-linecap="round"/>
<line x1="1477.81" y1="413.52" x2="1479.36" y2="414.38" stroke="#38c1ea" stroke-width="1.7" stroke-linecap="round"/>
<line x1="1479.36" y1="414.38" x2="1480.79" y2="415.25" stroke="#38c7e8" stroke-width="1.7" stroke-linecap="round"/>
<line x1="1480.79" y1="415.25" x2="1482.12" y2="416.11" stroke="#38cee6" stroke-width="1.7" stroke-linecap="round"/>
<line x1="1482.12" y1="416.11" x2="1483.33" y2="416.96" stroke="#38d5e5" stroke-width="1.7" stroke-linecap="round"/>
<line x1="1483.33" y1="416.96" x2="1484.42" y2="417.81" stroke="#38dce3" stroke-width="1.7" stroke-linecap="round"/>
<line x1="1484.42" y1="417.81" x2="1485.38" y2="418.65" stroke="#38e2e1" stroke-width="1.7" stroke-linecap="round"/>
<line x1="1485.38" y1="418.65" x2="1486.23" y2="419.47" stroke="#38e8df" stroke-width="1.7" stroke-linecap="round"/>
<line x1="1486.23" y1="419.47" x2="1486.94" y2="420.28" stroke="#37e6d6" stroke-width="1.7" stroke-linecap="round"/>
<line x1="1486.94" y1="420.28" x2="1487.53" y2="421.08" stroke="#36e4ce" stroke-width="1.7" stroke-linecap="round"/>
<line x1="1487.53" y1="421.08" x2="1487.98" y2="421.85" stroke="#35e3c6" stroke-width="1.7" stroke-linecap="round"/>
<line x1="1487.98" y1="421.85" x2="1488.31" y2="422.61" stroke="#35e1bd" stroke-width="1.7" stroke-linecap="round"/>
<line x1="1488.31" y1="422.61" x2="1488.50" y2="423.34" stroke="#34dfb5" stroke-width="1.7" stroke-linecap="round"/>
<line x1="1488.50" y1="423.34" x2="1488.55" y2="424.04" stroke="#33dead" stroke-width="1.7" stroke-linecap="round"/>
<line x1="1488.55" y1="424.04" x2="1488.48" y2="424.72" stroke="#32dca4" stroke-width="1.7" stroke-linecap="round"/>
<line x1="1440" y1="283.0" x2="1440" y2="286.2" stroke="#c04c6c" stroke-width="1.6" />
<line x1="1440" y1="288.5" x2="1440" y2="291.7" stroke="#d89050" stroke-width="1.6" />
<line x1="1440" y1="294.0" x2="1440" y2="297.2" stroke="#c05878" stroke-width="1.6" />
<line x1="1440" y1="299.5" x2="1440" y2="302.7" stroke="#e0a050" stroke-width="1.6" />
<line x1="1440" y1="305.0" x2="1440" y2="308.2" stroke="#c04c6c" stroke-width="1.6" />
<line x1="1440" y1="310.5" x2="1440" y2="313.7" stroke="#d89050" stroke-width="1.6" />
<line x1="1440" y1="316.0" x2="1440" y2="319.2" stroke="#c05878" stroke-width="1.6" />
<line x1="1440" y1="321.5" x2="1440" y2="324.7" stroke="#e0a050" stroke-width="1.6" />
<line x1="1440" y1="327.0" x2="1440" y2="330.2" stroke="#c04c6c" stroke-width="1.6" />
<line x1="1440" y1="332.5" x2="1440" y2="335.7" stroke="#d89050" stroke-width="1.6" />
<line x1="1440" y1="338.0" x2="1440" y2="341.2" stroke="#c05878" stroke-width="1.6" />
<line x1="1440" y1="343.5" x2="1440" y2="346.7" stroke="#e0a050" stroke-width="1.6" />
<line x1="1440" y1="349.0" x2="1440" y2="352.2" stroke="#c04c6c" stroke-width="1.6" />
<line x1="1440" y1="354.5" x2="1440" y2="357.7" stroke="#d89050" stroke-width="1.6" />
<line x1="1440" y1="360.0" x2="1440" y2="363.2" stroke="#c05878" stroke-width="1.6" />
<line x1="1440" y1="365.5" x2="1440" y2="368.7" stroke="#e0a050" stroke-width="1.6" />
<line x1="1440" y1="371.0" x2="1440" y2="374.2" stroke="#c04c6c" stroke-width="1.6" />
<line x1="1440" y1="376.5" x2="1440" y2="379.7" stroke="#d89050" stroke-width="1.6" />
<line x1="1440" y1="382.0" x2="1440" y2="385.2" stroke="#c05878" stroke-width="1.6" />
<line x1="1440" y1="387.5" x2="1440" y2="390.7" stroke="#e0a050" stroke-width="1.6" />
<line x1="1440" y1="393.0" x2="1440" y2="396.2" stroke="#c04c6c" stroke-width="1.6" />
<line x1="1440" y1="398.5" x2="1440" y2="401.7" stroke="#a060d0" stroke-width="1.6" />
<line x1="1440" y1="404.0" x2="1440" y2="407.2" stroke="#d08060" stroke-width="1.6" />
<line x1="1440" y1="409.5" x2="1440" y2="412.7" stroke="#a060d0" stroke-width="1.6" />
<line x1="1440" y1="415.0" x2="1440" y2="418.2" stroke="#d08060" stroke-width="1.6" />
<line x1="1440" y1="420.5" x2="1440" y2="423.7" stroke="#a060d0" stroke-width="1.6" />
<line x1="1440" y1="426.0" x2="1440" y2="429.2" stroke="#d08060" stroke-width="1.6" />
<line x1="1440" y1="431.5" x2="1440" y2="434.7" stroke="#4050c0" stroke-width="1.6" />
<line x1="1440" y1="437.0" x2="1440" y2="440.2" stroke="#40a060" stroke-width="1.6" />
<line x1="1440" y1="442.5" x2="1440" y2="445.7" stroke="#3050c0" stroke-width="1.6" />
<line x1="1440" y1="448.0" x2="1440" y2="451.2" stroke="#4050c0" stroke-width="1.6" />
<line x1="1440" y1="453.5" x2="1440" y2="456.7" stroke="#40a060" stroke-width="1.6" />
<line x1="1440" y1="459.0" x2="1440" y2="462.2" stroke="#3050c0" stroke-width="1.6" />
<line x1="1440" y1="464.5" x2="1440" y2="467.7" stroke="#4050c0" stroke-width="1.6" />
<line x1="1440" y1="470.0" x2="1440" y2="473.2" stroke="#40a060" stroke-width="1.6" />
<line x1="1440" y1="475.5" x2="1440" y2="478.7" stroke="#3050c0" stroke-width="1.6" />
<line x1="1440" y1="481.0" x2="1440" y2="484.2" stroke="#4050c0" stroke-width="1.6" />
<line x1="1440" y1="486.5" x2="1440" y2="489.7" stroke="#40a060" stroke-width="1.6" />
<line x1="1440" y1="492.0" x2="1440" y2="495.2" stroke="#3050c0" stroke-width="1.6" />
<line x1="1440" y1="497.5" x2="1440" y2="500.7" stroke="#4050c0" stroke-width="1.6" />
<line x1="1440" y1="503.0" x2="1440" y2="506.2" stroke="#30a0a0" stroke-width="1.6" />
<line x1="1440" y1="508.5" x2="1440" y2="511.7" stroke="#40c0d0" stroke-width="1.6" />
<line x1="1440" y1="514.0" x2="1440" y2="517.2" stroke="#30a0a0" stroke-width="1.6" />
<line x1="1440" y1="519.5" x2="1440" y2="522.7" stroke="#40c0d0" stroke-width="1.6" />
<line x1="1440" y1="525.0" x2="1440" y2="528.2" stroke="#30a0a0" stroke-width="1.6" />
<line x1="1440" y1="530.5" x2="1440" y2="533.7" stroke="#40c0d0" stroke-width="1.6" />
<line x1="1440" y1="536.0" x2="1440" y2="539.2" stroke="#30a0a0" stroke-width="1.6" />
<line x1="1440" y1="541.5" x2="1440" y2="544.7" stroke="#40c0d0" stroke-width="1.6" />
<line x1="1440" y1="547.0" x2="1440" y2="550.2" stroke="#30a0a0" stroke-width="1.6" />
<path d="M1435.8,413 L1445.8,413 L1440.4,428.5 Z" fill="#84d014"/>
<rect x="761" y="271" width="1059.8" height="569.6" fill="none" stroke="#646464" stroke-width="2"/>
<line x1="763.8" y1="272" x2="763.8" y2="277" stroke="#5f5f5f" stroke-width="2" />
<line x1="763.8" y1="834.5" x2="763.8" y2="839.5" stroke="#5f5f5f" stroke-width="2" />
<line x1="899.0999999999999" y1="272" x2="899.0999999999999" y2="277" stroke="#5f5f5f" stroke-width="2" />
<line x1="899.0999999999999" y1="834.5" x2="899.0999999999999" y2="839.5" stroke="#5f5f5f" stroke-width="2" />
<line x1="1034.3999999999999" y1="272" x2="1034.3999999999999" y2="277" stroke="#5f5f5f" stroke-width="2" />
<line x1="1034.3999999999999" y1="834.5" x2="1034.3999999999999" y2="839.5" stroke="#5f5f5f" stroke-width="2" />
<line x1="1169.6999999999998" y1="272" x2="1169.6999999999998" y2="277" stroke="#5f5f5f" stroke-width="2" />
<line x1="1169.6999999999998" y1="834.5" x2="1169.6999999999998" y2="839.5" stroke="#5f5f5f" stroke-width="2" />
<line x1="1305.0" y1="272" x2="1305.0" y2="277" stroke="#5f5f5f" stroke-width="2" />
<line x1="1305.0" y1="834.5" x2="1305.0" y2="839.5" stroke="#5f5f5f" stroke-width="2" />
<line x1="1440.3" y1="272" x2="1440.3" y2="277" stroke="#5f5f5f" stroke-width="2" />
<line x1="1440.3" y1="834.5" x2="1440.3" y2="839.5" stroke="#5f5f5f" stroke-width="2" />
<line x1="1575.6" y1="272" x2="1575.6" y2="277" stroke="#5f5f5f" stroke-width="2" />
<line x1="1575.6" y1="834.5" x2="1575.6" y2="839.5" stroke="#5f5f5f" stroke-width="2" />
<line x1="1710.9" y1="272" x2="1710.9" y2="277" stroke="#5f5f5f" stroke-width="2" />
<line x1="1710.9" y1="834.5" x2="1710.9" y2="839.5" stroke="#5f5f5f" stroke-width="2" />
<line x1="762.5" y1="308.02" x2="767.5" y2="308.02" stroke="#5f5f5f" stroke-width="2" />
<line x1="1815" y1="308.02" x2="1820" y2="308.02" stroke="#5f5f5f" stroke-width="2" />
<line x1="762.5" y1="361.16" x2="767.5" y2="361.16" stroke="#5f5f5f" stroke-width="2" />
<line x1="1815" y1="361.16" x2="1820" y2="361.16" stroke="#5f5f5f" stroke-width="2" />
<line x1="762.5" y1="414.3" x2="767.5" y2="414.3" stroke="#5f5f5f" stroke-width="2" />
<line x1="1815" y1="414.3" x2="1820" y2="414.3" stroke="#5f5f5f" stroke-width="2" />
<line x1="762.5" y1="467.44" x2="767.5" y2="467.44" stroke="#5f5f5f" stroke-width="2" />
<line x1="1815" y1="467.44" x2="1820" y2="467.44" stroke="#5f5f5f" stroke-width="2" />
<line x1="762.5" y1="520.58" x2="767.5" y2="520.58" stroke="#5f5f5f" stroke-width="2" />
<line x1="1815" y1="520.58" x2="1820" y2="520.58" stroke="#5f5f5f" stroke-width="2" />
<line x1="762.5" y1="573.72" x2="767.5" y2="573.72" stroke="#5f5f5f" stroke-width="2" />
<line x1="1815" y1="573.72" x2="1820" y2="573.72" stroke="#5f5f5f" stroke-width="2" />
<line x1="762.5" y1="626.86" x2="767.5" y2="626.86" stroke="#5f5f5f" stroke-width="2" />
<line x1="1815" y1="626.86" x2="1820" y2="626.86" stroke="#5f5f5f" stroke-width="2" />
<line x1="762.5" y1="680.0" x2="767.5" y2="680.0" stroke="#5f5f5f" stroke-width="2" />
<line x1="1815" y1="680.0" x2="1820" y2="680.0" stroke="#5f5f5f" stroke-width="2" />
<line x1="762.5" y1="733.14" x2="767.5" y2="733.14" stroke="#5f5f5f" stroke-width="2" />
<line x1="1815" y1="733.14" x2="1820" y2="733.14" stroke="#5f5f5f" stroke-width="2" />
<line x1="762.5" y1="786.28" x2="767.5" y2="786.28" stroke="#5f5f5f" stroke-width="2" />
<line x1="1815" y1="786.28" x2="1820" y2="786.28" stroke="#5f5f5f" stroke-width="2" />
<line x1="762.5" y1="839.4200000000001" x2="767.5" y2="839.4200000000001" stroke="#5f5f5f" stroke-width="2" />
<line x1="1815" y1="839.4200000000001" x2="1820" y2="839.4200000000001" stroke="#5f5f5f" stroke-width="2" />
<text x="763.8" y="858.6" font-size="12.5" fill="#111" text-anchor="middle" textLength="23.14" lengthAdjust="spacingAndGlyphs">-2.5</text>
<text x="899.0999999999999" y="858.6" font-size="12.5" fill="#111" text-anchor="middle" textLength="11.69" lengthAdjust="spacingAndGlyphs">-2</text>
<text x="1034.3999999999999" y="858.6" font-size="12.5" fill="#111" text-anchor="middle" textLength="23.14" lengthAdjust="spacingAndGlyphs">-1.5</text>
<text x="1169.6999999999998" y="858.6" font-size="12.5" fill="#111" text-anchor="middle" textLength="11.69" lengthAdjust="spacingAndGlyphs">-1</text>
<text x="1305.0" y="858.6" font-size="12.5" fill="#111" text-anchor="middle" textLength="23.14" lengthAdjust="spacingAndGlyphs">-0.5</text>
<text x="1440.3" y="858.6" font-size="12.5" fill="#111" text-anchor="middle" textLength="7.63" lengthAdjust="spacingAndGlyphs">0</text>
<text x="1575.6" y="858.6" font-size="12.5" fill="#111" text-anchor="middle" textLength="19.08" lengthAdjust="spacingAndGlyphs">0.5</text>
<text x="1710.9" y="858.6" font-size="12.5" fill="#111" text-anchor="middle" textLength="7.63" lengthAdjust="spacingAndGlyphs">1</text>
<text x="756.3" y="312.21999999999997" font-size="12.5" fill="#111" text-anchor="end" textLength="19.08" lengthAdjust="spacingAndGlyphs">0.4</text>
<text x="756.3" y="365.36" font-size="12.5" fill="#111" text-anchor="end" textLength="19.08" lengthAdjust="spacingAndGlyphs">0.2</text>
<text x="756.3" y="418.5" font-size="12.5" fill="#111" text-anchor="end" textLength="7.63" lengthAdjust="spacingAndGlyphs">0</text>
<text x="756.3" y="471.64" font-size="12.5" fill="#111" text-anchor="end" textLength="23.14" lengthAdjust="spacingAndGlyphs">-0.2</text>
<text x="756.3" y="524.7800000000001" font-size="12.5" fill="#111" text-anchor="end" textLength="23.14" lengthAdjust="spacingAndGlyphs">-0.4</text>
<text x="756.3" y="577.9200000000001" font-size="12.5" fill="#111" text-anchor="end" textLength="23.14" lengthAdjust="spacingAndGlyphs">-0.6</text>
<text x="756.3" y="631.0600000000001" font-size="12.5" fill="#111" text-anchor="end" textLength="23.14" lengthAdjust="spacingAndGlyphs">-0.8</text>
<text x="756.3" y="684.2" font-size="12.5" fill="#111" text-anchor="end" textLength="11.69" lengthAdjust="spacingAndGlyphs">-1</text>
<text x="756.3" y="737.34" font-size="12.5" fill="#111" text-anchor="end" textLength="23.14" lengthAdjust="spacingAndGlyphs">-1.2</text>
<text x="756.3" y="790.48" font-size="12.5" fill="#111" text-anchor="end" textLength="23.14" lengthAdjust="spacingAndGlyphs">-1.4</text>
<text x="756.3" y="843.6200000000001" font-size="12.5" fill="#111" text-anchor="end" textLength="23.14" lengthAdjust="spacingAndGlyphs">-1.6</text>
<text x="1291" y="875.3" font-size="13" fill="#111" text-anchor="middle" textLength="224" lengthAdjust="spacingAndGlyphs">Jones vector, out-of-plane component</text>
<text x="0" y="0" font-size="13" fill="#111" text-anchor="middle" textLength="202" lengthAdjust="spacingAndGlyphs" transform="translate(700.5,556) rotate(-90)">Jones vector, in-plane component</text>
<text x="1409.6" y="418.9" font-size="12.5" fill="#111" textLength="61.7" lengthAdjust="spacingAndGlyphs">m=0, n=0</text>
<text x="1134.6" y="684.8" font-size="12.5" fill="#111" textLength="69.1" lengthAdjust="spacingAndGlyphs">m=-1, n=-1</text>
<text x="1407" y="685.2" font-size="12.5" fill="#111" textLength="65.9" lengthAdjust="spacingAndGlyphs">m=0, n=-1</text>
<defs><linearGradient id="cb" x1="0" y1="0" x2="0" y2="1"><stop offset="0.0000" stop-color="rgb(232, 40, 58)"/><stop offset="0.0928" stop-color="rgb(240, 72, 152)"/><stop offset="0.1565" stop-color="rgb(240, 96, 240)"/><stop offset="0.2042" stop-color="rgb(200, 80, 240)"/><stop offset="0.2838" stop-color="rgb(136, 72, 240)"/><stop offset="0.3634" stop-color="rgb(56, 72, 240)"/><stop offset="0.4430" stop-color="rgb(56, 168, 240)"/><stop offset="0.5225" stop-color="rgb(56, 232, 224)"/><stop offset="0.6021" stop-color="rgb(48, 216, 144)"/><stop offset="0.6817" stop-color="rgb(24, 192, 32)"/><stop offset="0.7454" stop-color="rgb(168, 216, 32)"/><stop offset="0.7931" stop-color="rgb(228, 224, 32)"/><stop offset="0.8408" stop-color="rgb(245, 200, 30)"/><stop offset="0.9204" stop-color="rgb(240, 106, 32)"/><stop offset="1.0000" stop-color="rgb(232, 48, 42)"/></linearGradient></defs>
<rect x="1842" y="304.5" width="15.5" height="530.5" fill="url(#cb)" stroke="#333" stroke-width="1"/>
<line x1="1842" y1="835.0" x2="1845" y2="835.0" stroke="#222" stroke-width="1.2" />
<line x1="1854.5" y1="835.0" x2="1857.5" y2="835.0" stroke="#222" stroke-width="1.2" />
<text x="1866" y="839.4" font-size="12.5" fill="#111" textLength="7.6" lengthAdjust="spacingAndGlyphs">0</text>
<line x1="1842" y1="750.4300000000001" x2="1845" y2="750.4300000000001" stroke="#222" stroke-width="1.2" />
<line x1="1854.5" y1="750.4300000000001" x2="1857.5" y2="750.4300000000001" stroke="#222" stroke-width="1.2" />
<text x="1866" y="754.83" font-size="12.5" fill="#111" textLength="7.6" lengthAdjust="spacingAndGlyphs">1</text>
<line x1="1842" y1="665.86" x2="1845" y2="665.86" stroke="#222" stroke-width="1.2" />
<line x1="1854.5" y1="665.86" x2="1857.5" y2="665.86" stroke="#222" stroke-width="1.2" />
<text x="1866" y="670.26" font-size="12.5" fill="#111" textLength="7.6" lengthAdjust="spacingAndGlyphs">2</text>
<line x1="1842" y1="581.29" x2="1845" y2="581.29" stroke="#222" stroke-width="1.2" />
<line x1="1854.5" y1="581.29" x2="1857.5" y2="581.29" stroke="#222" stroke-width="1.2" />
<text x="1866" y="585.6899999999999" font-size="12.5" fill="#111" textLength="7.6" lengthAdjust="spacingAndGlyphs">3</text>
<line x1="1842" y1="496.72" x2="1845" y2="496.72" stroke="#222" stroke-width="1.2" />
<line x1="1854.5" y1="496.72" x2="1857.5" y2="496.72" stroke="#222" stroke-width="1.2" />
<text x="1866" y="501.12" font-size="12.5" fill="#111" textLength="7.6" lengthAdjust="spacingAndGlyphs">4</text>
<line x1="1842" y1="412.15000000000003" x2="1845" y2="412.15000000000003" stroke="#222" stroke-width="1.2" />
<line x1="1854.5" y1="412.15000000000003" x2="1857.5" y2="412.15000000000003" stroke="#222" stroke-width="1.2" />
<text x="1866" y="416.55" font-size="12.5" fill="#111" textLength="7.6" lengthAdjust="spacingAndGlyphs">5</text>
<line x1="1842" y1="327.58000000000004" x2="1845" y2="327.58000000000004" stroke="#222" stroke-width="1.2" />
<line x1="1854.5" y1="327.58000000000004" x2="1857.5" y2="327.58000000000004" stroke="#222" stroke-width="1.2" />
<text x="1866" y="331.98" font-size="12.5" fill="#111" textLength="7.6" lengthAdjust="spacingAndGlyphs">6</text>
<rect x="761.9" y="890.9" width="487" height="55.6" fill="#fff" stroke="#000" stroke-width="1.2"/>
<line x1="769" y1="906.6" x2="800" y2="906.6" stroke="#000" stroke-width="1.6" stroke-dasharray="2,2"/>
<text x="805.3" y="910.8" font-size="12.5" fill="#111" textLength="61" lengthAdjust="spacingAndGlyphs">Input field</text>
<line x1="769" y1="930.1" x2="800" y2="930.1" stroke="#000" stroke-width="2" />
<text x="805.3" y="937.6" font-size="12.5" fill="#111" textLength="57.7" lengthAdjust="spacingAndGlyphs">Reflection</text>
<line x1="1010" y1="906.6" x2="1040.7" y2="906.6" stroke="#3550c0" stroke-width="1.2" />
<text x="1047.1" y="910.8" font-size="12.5" fill="#111" textLength="192.5" lengthAdjust="spacingAndGlyphs">Propagation limit, reflection side</text>
<g transform="translate(12,13)"><rect x="0" y="0" width="9" height="7" rx="1.5" fill="#1c3f8a"/><rect x="1.5" y="1.5" width="5" height="4" fill="#c8d040"/><rect x="5" y="1" width="3" height="5" fill="#2a66c0"/></g>
<g transform="translate(44,9)"><path d="M0.7,0.7 H7.5 L11.3,4.5 V14.3 H0.7 Z" fill="#fff" stroke="#3a86c8" stroke-width="1.3"/><path d="M7.5,0.7 V4.5 H11.3" fill="none" stroke="#3a86c8" stroke-width="1.2"/></g>
<g transform="translate(72,11)"><path d="M0,0 H5 L6.5,1.5 H11.5 V4 H3.5 L0,11.5 Z" fill="#3a86c8"/><path d="M4,5 H16 L12.5,12 H1 Z" fill="#3a86c8"/></g>
<g transform="translate(103,10)"><path d="M0.7,0.7 H13.3 V13.3 H3 L0.7,11 Z" fill="#f4f8fc" stroke="#3a86c8" stroke-width="1.3"/><rect x="3" y="0.7" width="8" height="6" fill="none" stroke="#3a86c8" stroke-width="1.2"/><rect x="4.5" y="10" width="5" height="3.3" fill="none" stroke="#3a86c8" stroke-width="1.1"/></g>
<g transform="translate(132,10)"><path d="M0.7,0.7 H13.3 V13.3 H3 L0.7,11 Z" fill="#f4f8fc" stroke="#3a86c8" stroke-width="1.3"/><rect x="3" y="0.7" width="8" height="6" fill="none" stroke="#3a86c8" stroke-width="1.2"/><rect x="4.5" y="10" width="5" height="3.3" fill="none" stroke="#3a86c8" stroke-width="1.1"/><path d="M7,5.5 L14,12.5" stroke="#f4f8fc" stroke-width="4.2"/><path d="M7,5.5 L13.5,12" stroke="#3a86c8" stroke-width="2.6"/><path d="M12.2,13.2 L14.7,10.7 L16,15.5 Z" fill="#3a86c8"/></g>
<path d="M167,12 L176,16.5 L167,21 Z" fill="#bdbdbd"/>
<path d="M193,15 H201 A4,4 0 0 1 201,23 H197" fill="none" stroke="#3a86c8" stroke-width="1.4"/>
<path d="M191,15 L196,11 L196,19 Z" fill="#3a86c8"/>
<path d="M214.0,17.0 L216.5,20.0 L219.0,17.0" fill="none" stroke="#555" stroke-width="1.2"/>
<path d="M243,15 H235 A4,4 0 0 0 235,23 H239" fill="none" stroke="#c4c4c4" stroke-width="1.4"/>
<path d="M245,15 L240,11 L240,19 Z" fill="#c4c4c4"/>
<path d="M254.0,17.0 L256.5,20.0 L259.0,17.0" fill="none" stroke="#555" stroke-width="1.2"/>
<g transform="translate(273,9)"><path d="M2,0 L10,12 M11,0 L3,12" stroke="#c0c0c0" stroke-width="1.3"/><circle cx="2.5" cy="13.5" r="2.2" fill="none" stroke="#c0c0c0" stroke-width="1.3"/><circle cx="10.5" cy="13.5" r="2.2" fill="none" stroke="#c0c0c0" stroke-width="1.3"/></g>
<g transform="translate(302,9)"><rect x="0.6" y="0.6" width="10" height="12" fill="#fff" stroke="#888" stroke-width="1.2"/><rect x="5.6" y="3.6" width="10" height="12" fill="#fff" stroke="#3a86c8" stroke-width="1.3"/><path d="M8,7.5 H13 M8,10 H13 M8,12.5 H13" stroke="#3a86c8" stroke-width="1.1"/></g>
<g transform="translate(333,9)"><rect x="0.6" y="2" width="10" height="12" fill="#f4f4f4" stroke="#c8c8c8" stroke-width="1.2"/><rect x="6" y="6" width="9" height="10" fill="#f4f4f4" stroke="#c8c8c8" stroke-width="1.2"/><rect x="3" y="0.6" width="5" height="3" fill="none" stroke="#c8c8c8"/></g>
<g transform="translate(362,9)"><rect x="0.6" y="0.6" width="10" height="12" fill="#fff" stroke="#3a86c8" stroke-width="1.2"/><rect x="5.6" y="3.6" width="10" height="12" fill="#fff" stroke="#3a86c8" stroke-width="1.3"/><path d="M3,8.5 H10" stroke="#3a86c8" stroke-width="1.6"/><path d="M9,5.5 L13,8.5 L9,11.5 Z" fill="#3a86c8"/></g>
<g transform="translate(394,9)"><rect x="0" y="1.5" width="11" height="1.6" fill="#3a86c8"/><rect x="3.5" y="0" width="4" height="1.5" fill="#3a86c8"/><path d="M1,4 H10 V14 Q10,16 8,16 H3 Q1,16 1,14 Z" fill="#3a86c8"/><path d="M3.5,6 V13.5 M5.5,6 V13.5 M7.5,6 V13.5" stroke="#fff" stroke-width="0.9"/></g>
<g transform="translate(423,10)"><rect x="0.6" y="0.6" width="13.5" height="13.5" fill="none" stroke="#3a86c8" stroke-width="1.2" stroke-dasharray="2,1.5"/><rect x="3" y="3" width="6.5" height="6.5" fill="#3a86c8"/><path d="M8,8 L14.5,14.5" stroke="#3a86c8" stroke-width="1.5"/><path d="M7,7 L12,8 L8,12 Z" fill="#3a86c8"/></g>
<g transform="translate(453,10)"><rect x="0.6" y="0.6" width="13.5" height="13.5" fill="none" stroke="#3a86c8" stroke-width="1.2" stroke-dasharray="2,1.5"/><rect x="4" y="2.5" width="8" height="8" fill="#3a86c8"/><path d="M0.5,-1 L6,11" stroke="#555" stroke-width="1.2"/><path d="M4,10 L9,15 L6,16 L3,14 Z" fill="#f0b040"/></g>
<g transform="translate(482,9)"><rect x="0.6" y="0.6" width="11" height="12.5" fill="#fff" stroke="#777" stroke-width="1.2"/><path d="M3,4 H9 M3,6.5 H8 M3,9 H6" stroke="#777" stroke-width="1.1"/><circle cx="10.5" cy="10.5" r="3.2" fill="#fff" stroke="#3a86c8" stroke-width="1.8"/><path d="M12.8,12.8 L15.5,15.5" stroke="#3a86c8" stroke-width="2"/></g>
<path d="M518,13 H525" fill="none" stroke="#666" stroke-width="1.1"/>
<path d="M518.0,16.5 L521.5,20.5 L525.0,16.5" fill="none" stroke="#666" stroke-width="1.2"/>
<line x1="1805" y1="17.5" x2="1815" y2="17.5" stroke="#333" stroke-width="1" />
<rect x="1849.5" y="14.5" width="7" height="7" fill="none" stroke="#333" stroke-width="1"/>
<path d="M1851.5,14.5 V12.5 H1858.5 V19.5 H1856.5" fill="none" stroke="#333" stroke-width="1"/>
<path d="M1893,12 L1903.3,22.3 M1903.3,12 L1893,22.3" fill="none" stroke="#333" stroke-width="1"/>
<rect x="1893" y="41" width="16" height="16" fill="#2f86d0" rx="1.5"/>
<text x="1901" y="54" font-size="13" fill="#fff" text-anchor="middle">?</text>
<g transform="translate(26,77)"><rect x="0.6" y="0.6" width="24" height="18" rx="1.5" fill="#fff" stroke="#707070" stroke-width="1.3"/><rect x="1.2" y="1.2" width="22.8" height="2.6" fill="#d4d4d4"/><rect x="10" y="5" width="12.8" height="11.8" fill="#b44ea6"/><circle cx="7.1" cy="10.7" r="5.2" fill="#b44ea6" stroke="#fff" stroke-width="0.8"/><path d="M4,10.7 H8.5" stroke="#fff" stroke-width="1.8"/><path d="M7.5,8 L10.5,10.7 L7.5,13.4 Z" fill="#fff"/></g>
<g transform="translate(67,75)"><rect x="0.6" y="0.6" width="24" height="17" rx="1.5" fill="#fff" stroke="#707070" stroke-width="1.3"/><rect x="1.2" y="1.2" width="22.8" height="3.2" fill="#d4d4d4"/><rect x="10.2" y="9.2" width="21.6" height="14.5" rx="1.5" fill="#fff" stroke="#707070" stroke-width="1.3"/><rect x="10.8" y="9.8" width="20.4" height="1.8" fill="#d4d4d4"/><rect x="12" y="13.2" width="18" height="8.6" fill="#b44ea6"/></g>
<g transform="translate(127,74.5)"><path d="M1,0.5 V13.5 H14" fill="none" stroke="#707070" stroke-width="1"/><path d="M-0.5,2 L1,0 L2.5,2 M12.5,12 L14.5,13.5 L12.5,15" fill="none" stroke="#707070" stroke-width="0.9"/><path d="M2,4 Q4,1 6.5,5 T13,7" fill="none" stroke="#b44ea6" stroke-width="1.3"/></g>
<g transform="translate(127,101.5)"><path d="M1,0.5 V13.5 H14" fill="none" stroke="#707070" stroke-width="1"/><path d="M-0.5,2 L1,0 L2.5,2 M12.5,12 L14.5,13.5 L12.5,15" fill="none" stroke="#707070" stroke-width="0.9"/><path d="M2,4 Q4,1 6.5,5 T12,8" fill="none" stroke="#b44ea6" stroke-width="1.3"/><circle cx="12.3" cy="1.5" r="0.9" fill="#b44ea6"/></g>
<g transform="translate(125.5,128.5)"><circle cx="7.6" cy="7.6" r="7" fill="none" stroke="#707070" stroke-width="1.1"/><path d="M4,3.5 V11 H12" fill="none" stroke="#707070" stroke-width="1"/><path d="M5,6 Q7,4 8.5,7 T12,8" fill="none" stroke="#b44ea6" stroke-width="1"/></g>
<g transform="translate(221,74.5)"><path d="M1,0.5 V13.5 H14" fill="none" stroke="#707070" stroke-width="1"/><path d="M-0.5,2 L1,0 L2.5,2 M12.5,12 L14.5,13.5 L12.5,15" fill="none" stroke="#707070" stroke-width="0.9"/><rect x="3" y="2" width="10" height="9" fill="#e8a0e0" stroke="#b44ea6" stroke-width="1"/><path d="M3,5 H13 M3,8 H13 M8,2 V11" stroke="#b44ea6" stroke-width="1"/></g>
<g transform="translate(221,101.5)"><path d="M1,0.5 V13.5 H14" fill="none" stroke="#707070" stroke-width="1"/><path d="M-0.5,2 L1,0 L2.5,2 M12.5,12 L14.5,13.5 L12.5,15" fill="none" stroke="#707070" stroke-width="0.9"/><path d="M2.5,10 L5,7 L8,4 L11,6.5 L13.5,7.5" fill="none" stroke="#b44ea6" stroke-width="1"/><circle cx="2.5" cy="10" r="0.9" fill="#b44ea6"/><circle cx="8" cy="4" r="0.9" fill="#b44ea6"/><circle cx="13.5" cy="7.5" r="0.9" fill="#b44ea6"/></g>
<g transform="translate(221,128.5)"><path d="M1,0.5 V13.5 H14" fill="none" stroke="#707070" stroke-width="1"/><path d="M-0.5,2 L1,0 L2.5,2 M12.5,12 L14.5,13.5 L12.5,15" fill="none" stroke="#707070" stroke-width="0.9"/><rect x="3" y="6" width="2.2" height="7" fill="#b44ea6"/><rect x="6.5" y="1.5" width="2.2" height="11.5" fill="#b44ea6"/><rect x="10" y="7.5" width="2.2" height="5.5" fill="#b44ea6"/></g>
<g transform="translate(329,74)"><rect x="0.6" y="0.6" width="12.5" height="12" fill="#ddd" stroke="#707070" stroke-width="1.1"/><path d="M1,12.5 L6.8,2 L12.8,12.5 Z" fill="#c84a8a"/><path d="M1,1 L6.8,7 L12.8,1" fill="none" stroke="#707070" stroke-width="0.9"/></g>
<g transform="translate(328,101)"><path d="M0.6,0.6 H13 V10 H7.5 L5.5,13.5 L5,10 H0.6 Z" fill="#fff" stroke="#707070" stroke-width="1.1"/><path d="M4,3 H9.5 M6.8,3 V8" stroke="#b44ea6" stroke-width="1.1"/></g>
<path d="M426,88 Q432.5,76 440,87 T454,86" fill="none" stroke="#b44ea6" stroke-width="1.4"/>
<path d="M453.25,127.7 L455.5,130.3 L457.75,127.7" fill="none" stroke="#333" stroke-width="1.1"/>
<path d="M88.45,127.7 L90.7,130.3 L92.95,127.7" fill="none" stroke="#333" stroke-width="1.1"/>
<g transform="translate(487,73)"><ellipse cx="7.5" cy="8" rx="7" ry="7.5" fill="#f0f0f0" stroke="#c8c8c8" stroke-width="1.2"/><circle cx="5" cy="5" r="1.6" fill="#ccc"/><circle cx="9.5" cy="4.5" r="1.4" fill="#ccc"/><circle cx="5" cy="10.5" r="1.4" fill="#ccc"/><circle cx="10" cy="10" r="1.4" fill="#ccc"/></g>
<g transform="translate(487,101)"><path d="M0,2 H15 L9.5,8 V13 L6.5,15 V8 Z" fill="#d0d0d0"/><rect x="5" y="0" width="8" height="3" fill="#c4c4c4"/></g>
<g transform="translate(487,128)"><path d="M1,0 V15 H15" fill="none" stroke="#c8c8c8" stroke-width="1.2"/><rect x="1" y="0" width="6" height="6" fill="#d4d4d4"/><path d="M4,12 L8,8 L11,11 L14,9" fill="none" stroke="#c8c8c8" stroke-width="1"/></g>
<path d="M627,88 Q633.5,76 641,87 T655,86" fill="none" stroke="#c8c8c8" stroke-width="1.4"/>
<path d="M667.15,127.7 L669.4,130.3 L671.65,127.7" fill="none" stroke="#999" stroke-width="1.1"/>
<g transform="translate(708,74.5)"><rect x="0.6" y="0.6" width="14" height="14" fill="#fff" stroke="#707070" stroke-width="1.1"/><rect x="6.6" y="4.6" width="13" height="13" fill="#fff" stroke="#707070" stroke-width="1.1"/><rect x="13.6" y="9.6" width="15" height="13" fill="#fff" stroke="#707070" stroke-width="1.1"/><path d="M17,14 L19.5,12 H25 V19.5 H17 Z" fill="#b44ea6"/></g>
<g transform="translate(769,76)"><rect x="0" y="0" width="30" height="19" fill="#b44ea6"/><rect x="3" y="3.5" width="7" height="12" fill="#e0a8dc"/><rect x="11.5" y="3.5" width="7" height="12" fill="#e0a8dc"/><rect x="20" y="3.5" width="7" height="12" fill="#e0a8dc"/><rect x="1.0" y="0.8" width="1.6" height="1.5" fill="#fff"/><rect x="1.0" y="16.7" width="1.6" height="1.5" fill="#fff"/><rect x="4.6" y="0.8" width="1.6" height="1.5" fill="#fff"/><rect x="4.6" y="16.7" width="1.6" height="1.5" fill="#fff"/><rect x="8.2" y="0.8" width="1.6" height="1.5" fill="#fff"/><rect x="8.2" y="16.7" width="1.6" height="1.5" fill="#fff"/><rect x="11.8" y="0.8" width="1.6" height="1.5" fill="#fff"/><rect x="11.8" y="16.7" width="1.6" height="1.5" fill="#fff"/><rect x="15.4" y="0.8" width="1.6" height="1.5" fill="#fff"/><rect x="15.4" y="16.7" width="1.6" height="1.5" fill="#fff"/><rect x="19.0" y="0.8" width="1.6" height="1.5" fill="#fff"/><rect x="19.0" y="16.7" width="1.6" height="1.5" fill="#fff"/><rect x="22.6" y="0.8" width="1.6" height="1.5" fill="#fff"/><rect x="22.6" y="16.7" width="1.6" height="1.5" fill="#fff"/><rect x="26.2" y="0.8" width="1.6" height="1.5" fill="#fff"/><rect x="26.2" y="16.7" width="1.6" height="1.5" fill="#fff"/></g>
<path d="M781.75,127.7 L784,130.3 L786.25,127.7" fill="none" stroke="#333" stroke-width="1.1"/>
<path d="M258.0,193.6 L261.5,197.4 L265.0,193.6" fill="none" stroke="#b8b8b8" stroke-width="1.1"/>
<rect x="276.2" y="191.2" width="8.6" height="8.6" fill="none" stroke="#b0b0b0" stroke-width="1"/>
<rect x="276.2" y="191.2" width="8.6" height="2" fill="#b0b0b0"/>
<path d="M294.8,190.5 H299.8 M295.8,190.5 V196.5 M298.8,190.5 V196.5 M293.8,196.5 H300.8 M297.3,196.5 V200.5" fill="none" stroke="#b0b0b0" stroke-width="1"/>
<path d="M627.0,193.6 L630.5,197.4 L634.0,193.6" fill="none" stroke="#b8b8b8" stroke-width="1.1"/>
<rect x="645.2" y="191.2" width="8.6" height="8.6" fill="none" stroke="#b0b0b0" stroke-width="1"/>
<rect x="645.2" y="191.2" width="8.6" height="2" fill="#b0b0b0"/>
<path d="M663.8,190.5 H668.8 M664.8,190.5 V196.5 M667.8,190.5 V196.5 M662.8,196.5 H669.8 M666.3,196.5 V200.5" fill="none" stroke="#b0b0b0" stroke-width="1"/>
<path d="M1861.0,193.6 L1864.5,197.4 L1868.0,193.6" fill="none" stroke="#b8b8b8" stroke-width="1.1"/>
<rect x="1879.2" y="191.2" width="8.6" height="8.6" fill="none" stroke="#b0b0b0" stroke-width="1"/>
<rect x="1879.2" y="191.2" width="8.6" height="2" fill="#b0b0b0"/>
<path d="M1898.0,190.5 H1903.0 M1899.0,190.5 V196.5 M1902.0,190.5 V196.5 M1897.0,196.5 H1904.0 M1900.5,196.5 V200.5" fill="none" stroke="#b0b0b0" stroke-width="1"/>
<path d="M1861.0,979.1 L1864.5,982.9 L1868.0,979.1" fill="none" stroke="#b8b8b8" stroke-width="1.1"/>
<rect x="1879.2" y="976.7" width="8.6" height="8.6" fill="none" stroke="#b0b0b0" stroke-width="1"/>
<rect x="1879.2" y="976.7" width="8.6" height="2" fill="#b0b0b0"/>
<path d="M1898.0,976 H1903.0 M1899.0,976 V982 M1902.0,976 V982 M1897.0,982 H1904.0 M1900.5,982 V986" fill="none" stroke="#b0b0b0" stroke-width="1"/>
<path d="M15,223.4 L21,219.5 V227.3 Z" fill="#3a86c8"/>
<line x1="20" y1="223.4" x2="29" y2="223.4" stroke="#3a86c8" stroke-width="1.4" />
<path d="M52,223.4 L46,219.5 V227.3 Z" fill="#b8b8b8"/>
<line x1="38" y1="223.4" x2="47" y2="223.4" stroke="#b8b8b8" stroke-width="1.4" />
<path d="M67.5,217 L71.2,222.5 H63.8 Z" fill="#3a86c8"/>
<line x1="67.5" y1="222" x2="67.5" y2="231" stroke="#3a86c8" stroke-width="1.3" />
<path d="M90.5,231 L94.2,225.5 H86.8 Z" fill="#3a86c8"/>
<line x1="90.5" y1="217" x2="90.5" y2="226" stroke="#3a86c8" stroke-width="1.3" />
<g transform="translate(107,219)"><rect x="0" y="0" width="1.8" height="1.6" fill="#3a86c8"/><rect x="3" y="0" width="10" height="1.6" fill="#3a86c8"/><path d="M1.5,6 Q6.5,1.5 11.5,6 Q6.5,10.5 1.5,6 Z" fill="none" stroke="#3a86c8" stroke-width="1.4"/><circle cx="6.5" cy="6" r="2" fill="#3a86c8"/></g>
<g transform="translate(129,218)"><rect x="0" y="0.0" width="1.2" height="1.2" fill="#3a86c8"/><rect x="2.5" y="0.0" width="8" height="1.2" fill="#3a86c8"/><rect x="0" y="2.3" width="1.2" height="1.2" fill="#3a86c8"/><rect x="2.5" y="2.3" width="8" height="1.2" fill="#3a86c8"/><rect x="0" y="4.6" width="1.2" height="1.2" fill="#3a86c8"/><rect x="2.5" y="4.6" width="8" height="1.2" fill="#3a86c8"/><rect x="0" y="6.9" width="1.2" height="1.2" fill="#3a86c8"/><rect x="2.5" y="6.9" width="8" height="1.2" fill="#3a86c8"/><rect x="0" y="9.2" width="1.2" height="1.2" fill="#3a86c8"/><rect x="2.5" y="9.2" width="8" height="1.2" fill="#3a86c8"/><rect x="0" y="11.5" width="1.2" height="1.2" fill="#3a86c8"/><rect x="2.5" y="11.5" width="8" height="1.2" fill="#3a86c8"/><path d="M13.5,12 V1" stroke="#3a86c8" stroke-width="1.2"/><path d="M11,3 L13.5,0 L16,3 Z" fill="#3a86c8"/></g>
<path d="M150.75,222.0 L157.25,222.0 L154,226.0 Z" fill="#111"/>
<g transform="translate(170.4,218.3)"><rect x="0" y="0.0" width="1.2" height="1.2" fill="#3a86c8"/><rect x="2.5" y="0.0" width="8" height="1.2" fill="#3a86c8"/><rect x="0" y="2.3" width="1.2" height="1.2" fill="#3a86c8"/><rect x="2.5" y="2.3" width="8" height="1.2" fill="#3a86c8"/><rect x="0" y="4.6" width="1.2" height="1.2" fill="#3a86c8"/><rect x="2.5" y="4.6" width="8" height="1.2" fill="#3a86c8"/><rect x="0" y="6.9" width="1.2" height="1.2" fill="#3a86c8"/><rect x="2.5" y="6.9" width="8" height="1.2" fill="#3a86c8"/><rect x="0" y="9.2" width="1.2" height="1.2" fill="#3a86c8"/><rect x="2.5" y="9.2" width="8" height="1.2" fill="#3a86c8"/><rect x="0" y="11.5" width="1.2" height="1.2" fill="#3a86c8"/><rect x="2.5" y="11.5" width="8" height="1.2" fill="#3a86c8"/><path d="M13.5,0 V10" stroke="#3a86c8" stroke-width="1.2"/><path d="M11,9 L13.5,12 L16,9 Z" fill="#3a86c8"/></g>
<path d="M192.35,222.0 L198.85,222.0 L195.6,226.0 Z" fill="#111"/>
<g transform="translate(213,218.3)"><rect x="0" y="0.0" width="7" height="1.2" fill="#999"/><rect x="8.5" y="0.0" width="2.5" height="1.2" fill="#3a86c8"/><rect x="0" y="2.3" width="7" height="1.2" fill="#999"/><rect x="8.5" y="2.3" width="2.5" height="1.2" fill="#3a86c8"/><rect x="0" y="4.6" width="7" height="1.2" fill="#999"/><rect x="8.5" y="4.6" width="2.5" height="1.2" fill="#3a86c8"/><rect x="0" y="6.9" width="7" height="1.2" fill="#999"/><rect x="8.5" y="6.9" width="2.5" height="1.2" fill="#3a86c8"/><rect x="0" y="9.2" width="7" height="1.2" fill="#999"/><rect x="8.5" y="9.2" width="2.5" height="1.2" fill="#3a86c8"/><rect x="0" y="11.5" width="7" height="1.2" fill="#999"/><rect x="8.5" y="11.5" width="2.5" height="1.2" fill="#3a86c8"/></g>
<path d="M232.15,222.0 L238.65,222.0 L235.4,226.0 Z" fill="#111"/>
<g transform="translate(250.8,217.2)"><rect x="4" y="0" width="11" height="4" fill="#3a86c8"/><path d="M0,5 H16 L10.5,10 V11 H5.5 V10 Z" fill="#888"/><rect x="7.2" y="11.5" width="1.8" height="3.3" fill="#3a86c8"/></g>
<path d="M272.25,222.0 L278.75,222.0 L275.5,226.0 Z" fill="#111"/>
<path d="M299,246.5 A5.5,5.5 0 1 0 300,251" fill="none" stroke="#3a86c8" stroke-width="1.3"/>
<path d="M296.5,243 L301.2,243 L301.2,248 Z" fill="#3a86c8"/>
<g transform="translate(325,235)"><rect x="0.5" y="0.5" width="15" height="12.5" fill="#fff" stroke="#808080" stroke-width="0.9"/><rect x="1" y="1" width="14" height="1.8" fill="#ccc"/><rect x="6" y="4" width="8" height="7.5" fill="#b44ea6"/><circle cx="5" cy="7.8" r="3.3" fill="#b44ea6" stroke="#fff" stroke-width="0.6"/><path d="M3,7.8 H6 M5,6.3 L6.5,7.8 L5,9.3" stroke="#fff" stroke-width="1" fill="none"/></g>
<path d="M374.2,237.3 V246.5" fill="none" stroke="#b450a6" stroke-width="2.2"/>
<path d="M375,241.6 L380.5,236.8 V246.4 Z" fill="#b450a6"/>
<line x1="379" y1="241.6" x2="389" y2="241.6" stroke="#b450a6" stroke-width="3" />
<path d="M397,241.6 L402.5,236.8 V246.4 Z" fill="#b450a6"/>
<line x1="401.5" y1="241.6" x2="411" y2="241.6" stroke="#b450a6" stroke-width="3" />
<path d="M434,241.6 L428.5,236.8 V246.4 Z" fill="#b450a6"/>
<line x1="420" y1="241.6" x2="429.5" y2="241.6" stroke="#b450a6" stroke-width="3" />
<path d="M456.5,241.6 L451,236.8 V246.4 Z" fill="#b450a6"/>
<line x1="442" y1="241.6" x2="452" y2="241.6" stroke="#b450a6" stroke-width="3" />
<path d="M457.4,237.3 V246.5" fill="none" stroke="#b450a6" stroke-width="2.2"/>
<path d="M18.75,271.5 L22.5,275.5 L26.25,271.5" fill="none" stroke="#1b1b1b" stroke-width="1.4"/>
<path d="M38.55,289.5 L42.3,293.5 L46.05,289.5" fill="none" stroke="#1b1b1b" stroke-width="1.4"/>
<path d="M39.85,360.25 L44.15,364.0 L39.85,367.75" fill="none" stroke="#555" stroke-width="1.3"/>
<path d="M39.85,378.25 L44.15,382.0 L39.85,385.75" fill="none" stroke="#555" stroke-width="1.3"/>
<path d="M38.55,397.5 L42.3,401.5 L46.05,397.5" fill="none" stroke="#1b1b1b" stroke-width="1.4"/>
<path d="M59.85,414.25 L64.15,418.0 L59.85,421.75" fill="none" stroke="#555" stroke-width="1.3"/>
<path d="M59.85,432.25 L64.15,436.0 L59.85,439.75" fill="none" stroke="#555" stroke-width="1.3"/>
<path d="M59.85,450.25 L64.15,454.0 L59.85,457.75" fill="none" stroke="#555" stroke-width="1.3"/>
<path d="M59.85,504.25 L64.15,508.0 L59.85,511.75" fill="none" stroke="#555" stroke-width="1.3"/>
<path d="M59.85,522.25 L64.15,526.0 L59.85,529.75" fill="none" stroke="#555" stroke-width="1.3"/>
<path d="M59.85,540.25 L64.15,544.0 L59.85,547.75" fill="none" stroke="#555" stroke-width="1.3"/>
<path d="M59.85,558.25 L64.15,562.0 L59.85,565.75" fill="none" stroke="#555" stroke-width="1.3"/>
<path d="M59.85,576.25 L64.15,580.0 L59.85,583.75" fill="none" stroke="#555" stroke-width="1.3"/>
<g transform="translate(33,268)"><path d="M0,5.6 L5.2,0 H10.6 L16,5.6 L10.6,11.5 H5.2 Z" fill="#3a86c8"/><path d="M0,5.6 H5.2 L10.6,0 M5.2,5.6 L10.6,11.5" stroke="#e8f6ff" stroke-width="1.1" fill="none"/></g>
<g transform="translate(54,284.4)"><circle cx="7.5" cy="7.6" r="6.8" fill="#fff" stroke="#3a86c8" stroke-width="1.2"/><ellipse cx="7.5" cy="7.6" rx="3" ry="6.8" fill="none" stroke="#3a86c8" stroke-width="1.1"/><path d="M7.5,0.8 V14.4 M1,5 H14 M1,10.2 H14" stroke="#3a86c8" stroke-width="1.1"/></g>
<text x="75.5" y="315" font-size="12" fill="#3a86c8">P</text><rect x="84" y="308" width="1.2" height="1.2" fill="#3a86c8"/><rect x="84" y="310.5" width="1.2" height="5.5" fill="#3a86c8"/>
<g transform="translate(73.5,320)"><path d="M0,10 L4.3,5.2 H9 L13.5,10 L9,15 H4.3 Z" fill="#3a86c8"/><path d="M0,10 H4.3 L9,5.2 M4.3,10 L9,15" stroke="#e8f6ff" stroke-width="1" fill="none"/><path d="M10,0.5 L15.5,4 L10,7.5 Z" fill="#2a9cc0"/></g>
<g transform="translate(73,338)"><circle cx="8" cy="8" r="7.3" fill="#fff" stroke="#e8a050" stroke-width="1.2"/><rect x="6.7" y="3" width="2.6" height="2.6" fill="#e0a040"/><rect x="3.5" y="6.7" width="2.6" height="2.6" fill="#e0a040"/><rect x="6.7" y="6.7" width="2.6" height="2.6" fill="#e0a040"/><rect x="9.9" y="6.7" width="2.6" height="2.6" fill="#e0a040"/><rect x="3.5" y="9.9" width="2.6" height="2.6" fill="#e0a040"/><rect x="6.7" y="9.9" width="2.6" height="2.6" fill="#e0a040"/><rect x="9.9" y="9.9" width="2.6" height="2.6" fill="#e0a040"/></g>
<g transform="translate(54.8,357.8)"><path d="M0,0 H10.5 L13.5,3 V13 H3 L0,10 Z" fill="#3a86c8"/><path d="M3,13 V3 H13.5 M0.4,0.4 L3,3" stroke="#fff" stroke-width="0.9" fill="none"/></g>
<g transform="translate(52.8,377.3)"><path d="M0.5,4.5 Q2.5,-0.5 4.5,3 T6.8,5.5" fill="none" stroke="#2a9cb8" stroke-width="1.2"/><circle cx="9" cy="4.8" r="2.6" fill="none" stroke="#2a9cb8" stroke-width="1.2"/><circle cx="13.5" cy="4.3" r="2.6" fill="none" stroke="#2a9cb8" stroke-width="1.2"/></g>
<g transform="translate(53.2,392)"><rect x="2.5" y="0.5" width="9" height="9" fill="#fff" stroke="#888"/><rect x="4.5" y="2.5" width="10" height="10" fill="#fff" stroke="#888"/><rect x="6.5" y="4.5" width="8" height="7" fill="#b44ea6"/><path d="M0.5,10 V13 L2.5,14.5 H15.5 V12.5" fill="none" stroke="#999" stroke-width="1.1"/></g>
<g transform="translate(73.2,410)"><polygon points="15.56,7.26 15.56,8.74 13.36,9.63 12.94,10.64 13.87,12.82 12.82,13.87 10.64,12.94 9.63,13.36 8.74,15.56 7.26,15.56 6.37,13.36 5.36,12.94 3.18,13.87 2.13,12.82 3.06,10.64 2.64,9.63 0.44,8.74 0.44,7.26 2.64,6.37 3.06,5.36 2.13,3.18 3.18,2.13 5.36,3.06 6.37,2.64 7.26,0.44 8.74,0.44 9.63,2.64 10.64,3.06 12.82,2.13 13.87,3.18 12.94,5.36 13.36,6.37" fill="none" stroke="#b44ea6" stroke-width="1" stroke-linejoin="round"/><circle cx="8" cy="8" r="2.5" fill="none" stroke="#b44ea6" stroke-width="1.1"/></g>
<g transform="translate(74.8,429)"><rect x="0.0" y="0.0" width="1.7" height="1.2" fill="#a8509c"/><rect x="0.0" y="2.3" width="1.7" height="1.2" fill="#a8509c"/><rect x="0.0" y="4.6" width="1.7" height="1.2" fill="#a8509c"/><rect x="0.0" y="6.9" width="1.7" height="1.2" fill="#a8509c"/><rect x="0.0" y="9.2" width="1.7" height="1.2" fill="#a8509c"/><rect x="0.0" y="11.5" width="1.7" height="1.2" fill="#a8509c"/><rect x="2.5" y="0.0" width="1.7" height="1.2" fill="#a8509c"/><rect x="2.5" y="2.3" width="1.7" height="1.2" fill="#a8509c"/><rect x="2.5" y="4.6" width="1.7" height="1.2" fill="#a8509c"/><rect x="2.5" y="6.9" width="1.7" height="1.2" fill="#a8509c"/><rect x="2.5" y="9.2" width="1.7" height="1.2" fill="#a8509c"/><rect x="2.5" y="11.5" width="1.7" height="1.2" fill="#a8509c"/><rect x="5.0" y="0.0" width="1.7" height="1.2" fill="#a8509c"/><rect x="5.0" y="2.3" width="1.7" height="1.2" fill="#a8509c"/><rect x="5.0" y="4.6" width="1.7" height="1.2" fill="#a8509c"/><rect x="5.0" y="6.9" width="1.7" height="1.2" fill="#a8509c"/><rect x="5.0" y="9.2" width="1.7" height="1.2" fill="#a8509c"/><rect x="5.0" y="11.5" width="1.7" height="1.2" fill="#a8509c"/><rect x="7.5" y="0.0" width="1.7" height="1.2" fill="#a8509c"/><rect x="7.5" y="2.3" width="1.7" height="1.2" fill="#a8509c"/><rect x="7.5" y="4.6" width="1.7" height="1.2" fill="#a8509c"/><rect x="7.5" y="6.9" width="1.7" height="1.2" fill="#a8509c"/><rect x="7.5" y="9.2" width="1.7" height="1.2" fill="#a8509c"/><rect x="7.5" y="11.5" width="1.7" height="1.2" fill="#a8509c"/><rect x="10.0" y="0.0" width="1.7" height="1.2" fill="#a8509c"/><rect x="10.0" y="2.3" width="1.7" height="1.2" fill="#a8509c"/><rect x="10.0" y="4.6" width="1.7" height="1.2" fill="#a8509c"/><rect x="10.0" y="6.9" width="1.7" height="1.2" fill="#a8509c"/><rect x="10.0" y="9.2" width="1.7" height="1.2" fill="#a8509c"/><rect x="10.0" y="11.5" width="1.7" height="1.2" fill="#a8509c"/></g>
<g transform="translate(73,445)"><path d="M7,13 V1.5" stroke="#3a7fc0" stroke-width="1.1"/><path d="M5.8,2.5 L7,0.5 L8.2,2.5" fill="#3a7fc0"/><path d="M7,13 L1.5,8" stroke="#3aa050" stroke-width="1.1"/><path d="M7,13 L15,8.5" stroke="#c04060" stroke-width="1.1"/><path d="M13.5,8 L15.5,8.3 L14.5,10" fill="#c04060"/></g>
<text x="73.2" y="471.5" font-size="7.2" fill="#b44ea6" textLength="16" lengthAdjust="spacingAndGlyphs">8.85</text><text x="73.5" y="477.8" font-size="7.2" fill="#b44ea6" textLength="15" lengthAdjust="spacingAndGlyphs">e-12</text>
<g transform="translate(74,482.5)"><rect x="0.5" y="0.5" width="12.5" height="12" fill="none" stroke="#b44ea6" stroke-width="1.2"/><path d="M0.5,4.5 H13 M0.5,8.5 H13 M4.6,0.5 V12.5 M8.8,0.5 V12.5" stroke="#b44ea6" stroke-width="1.2"/></g>
<g transform="translate(74,501)"><path d="M0,0 H11.5 L15,3.3 V14 H3.3 L0,10.7 Z" fill="#b44ea6"/><path d="M3.3,14 V3.3 H15 M0.4,0.4 L3.3,3.3" stroke="#fff" stroke-width="0.9" fill="none"/></g>
<g transform="translate(74,520.5)"><path d="M0.5,5.5 Q3.5,0 7,4 T14,4" fill="none" stroke="#b44ea6" stroke-width="1.2"/></g>
<g transform="translate(74,538.5)"><path d="M0.5,5.5 Q3.5,0 7,4 T14,4" fill="none" stroke="#b44ea6" stroke-width="1.2"/></g>
<g transform="translate(74,555)"><path d="M0,0 H11.5 L15,3.3 V14 H3.3 L0,10.7 Z" fill="#b44ea6"/><path d="M3.3,14 V3.3 H15 M0.4,0.4 L3.3,3.3" stroke="#fff" stroke-width="0.9" fill="none"/></g>
<g transform="translate(74,574.5)"><path d="M0.5,5.5 Q3.5,0 7,4 T14,4" fill="none" stroke="#b44ea6" stroke-width="1.2"/></g>
<g transform="translate(73,590.5)"><path d="M0.5,3.5 L3.5,0.5 H15 V10 L12,13 H0.5 Z" fill="#b44ea6"/><rect x="4" y="5" width="7" height="5" fill="#fff"/><rect x="5" y="6" width="5" height="3" fill="#b44ea6"/><path d="M1,3.5 H12 V12.5" stroke="#fff" stroke-width="0.8" fill="none"/></g>
<g transform="translate(75,608)"><rect x="0.5" y="1.5" width="11" height="13" fill="#fff" stroke="#b44ea6" stroke-width="1.1"/><path d="M2.5,4.5 H6 M2.5,7 H5" stroke="#b44ea6" stroke-width="1"/><path d="M13,1 L15,3 L7,11.5 L4.5,12.5 L5.2,10 Z" fill="#b44ea6"/></g>
</svg></body></html>
